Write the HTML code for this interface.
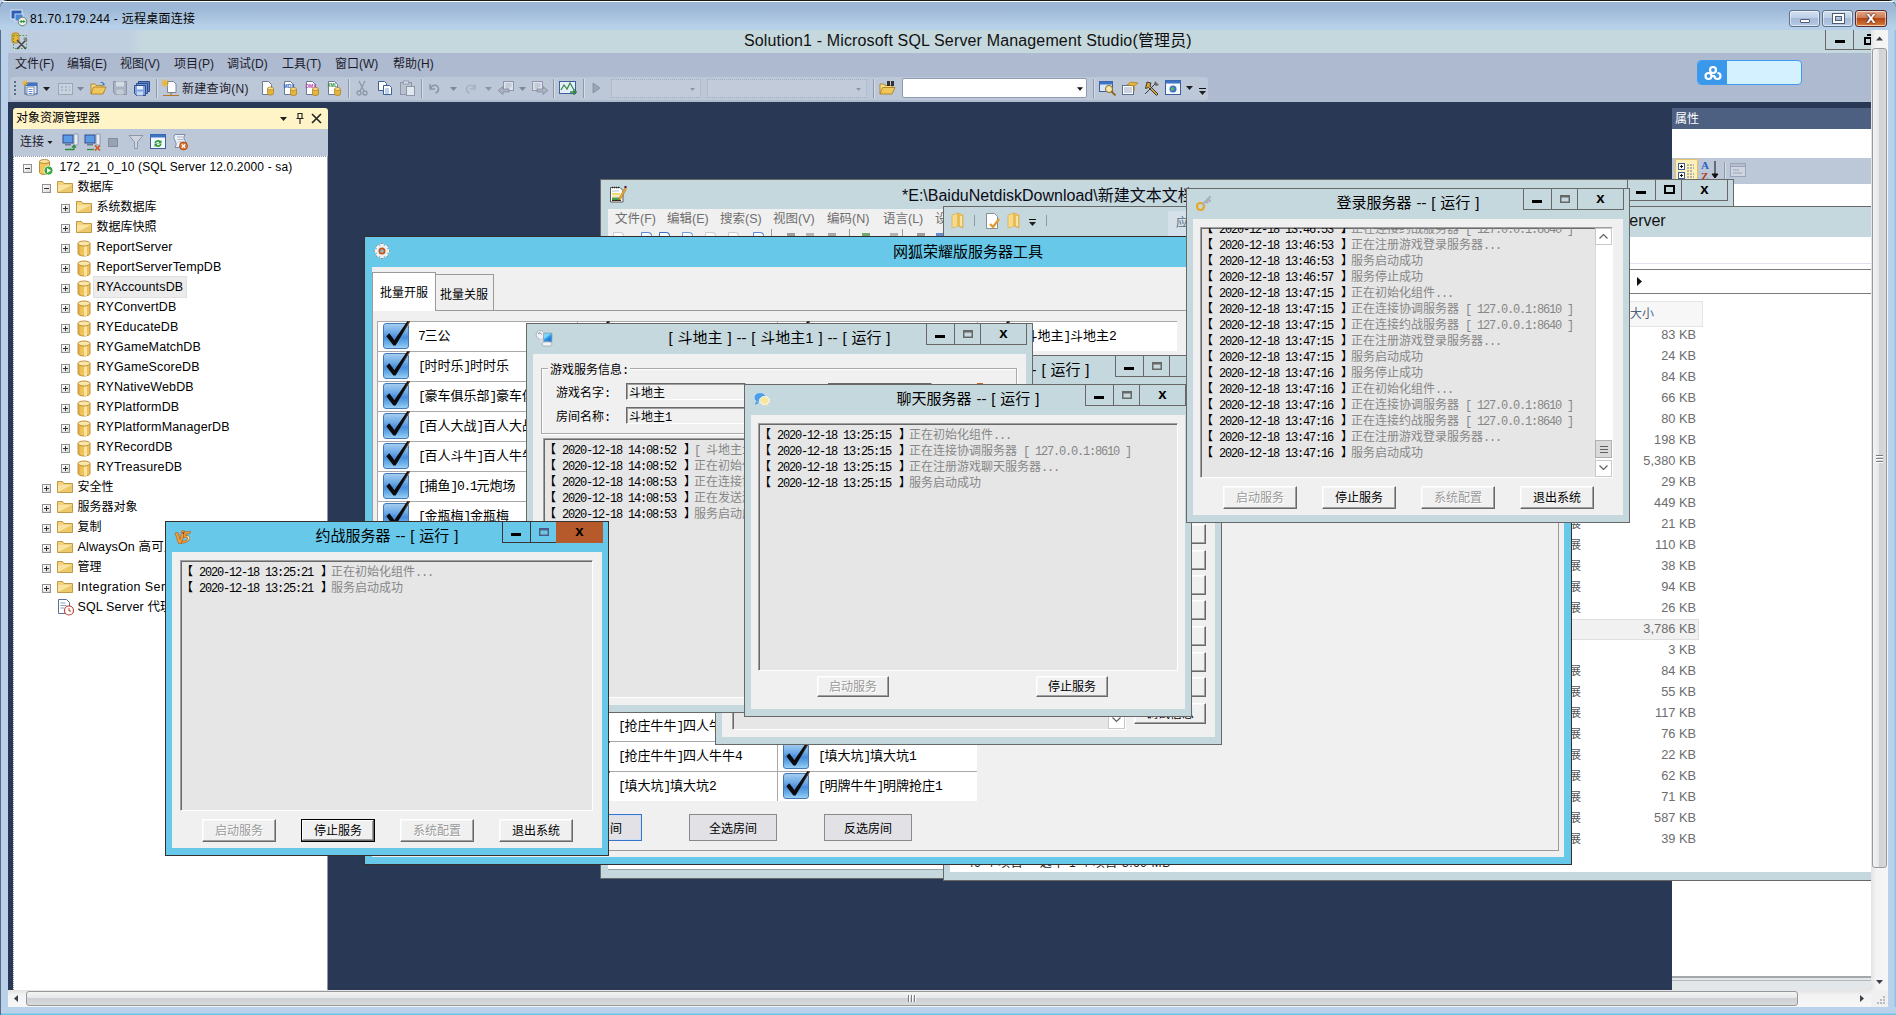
<!DOCTYPE html>
<html lang="zh-CN"><head><meta charset="utf-8"><title>81.70.179.244 - 远程桌面连接</title>
<style>
*{box-sizing:border-box;margin:0;padding:0}
html,body{width:1896px;height:1015px;overflow:hidden}
body{position:relative;background:#b9d1ea;font-family:"Liberation Sans","Noto Sans CJK SC",sans-serif;font-size:12px;color:#000}
div,span,svg{position:absolute}
i{font-style:normal;font-family:"Liberation Mono",monospace}
.t{white-space:nowrap;line-height:1}
/* ---------- RDP outer frame ---------- */
#rdpTop{left:0;top:0;width:1896px;height:30px;background:linear-gradient(#9db8d7 0,#9db8d7 28%,#a9c3df 55%,#b6d0e9 88%);border-top:1px solid #181818;border-radius:7px 7px 0 0}
#rdpTop:before{content:"";position:absolute;left:2px;right:2px;top:0;height:1px;background:#fbfdff;border-radius:7px}
.cap7{top:10px;height:17px;border:1px solid #5f708a;border-radius:3px;background:linear-gradient(#d3e0f0,#bccfe6 45%,#a5bbd9 50%,#b4c8e2);box-shadow:inset 0 0 0 1px rgba(255,255,255,.55)}
.cap7.close{background:linear-gradient(#e0a98f,#cf7b52 45%,#b4481d 50%,#c96a2c 85%,#d98a45);border-color:#5a2a2a}
#view{overflow:hidden}
#view div,#view span,#view svg{position:absolute}
/* scrollbars (win7) */
.sbv{left:1871px;top:30px;width:17px;height:960px;background:linear-gradient(90deg,#e3e3e3,#f3f3f3 30%,#f6f6f6)}
.sbh{left:8px;top:990px;width:1863px;height:17px;background:linear-gradient(#e3e3e3,#f3f3f3 30%,#f6f6f6)}
.thv{border:1px solid #97989b;border-radius:3px;background:linear-gradient(90deg,#f4f4f4,#e6e7e8 45%,#d0d2d5 50%,#d9dadc)}
.thh{border:1px solid #97989b;border-radius:3px;background:linear-gradient(#f4f4f4,#e6e7e8 45%,#cdd0d3 50%,#d9dadc)}
/* ---------- SSMS ---------- */
.menu span{top:0;line-height:23px;color:#1b1b2b}
.tbstrip{background:#bcc7d8;border-radius:3px}
.sep{width:1px;background:#8d98ab;box-shadow:1px 0 0 #d6dde8}
.ico{width:16px;height:16px}
/* ---------- win8 classic style windows ---------- */
.win{background:#c5d8de;border:1px solid #686868}
.win.act{background:#67c8ea;border-color:#35302f}
.win.act .capb,.win.act .capb b{border-color:#3a3434}
.cli{background:#f0f0f0}
.ttl{word-spacing:.7px;font-size:15px;line-height:30px;height:30px;top:0;white-space:nowrap;text-align:center;color:#000}
.capb{height:22px;top:-1px;border:1px solid #686868}
.capb b{top:0;height:20px;border-left:1px solid #686868;font-weight:normal}
.capb b:first-child{border-left:0}
.capb b,.capb u{position:absolute}
.capb u{text-decoration:none}
.gmin{left:8px;top:11px;width:10px;height:3px;background:#000}
.gmax{left:8px;top:6px;width:10px;height:8px;border:1px solid #686868;border-top-width:2px;box-shadow:inset 0 0 0 .5px #686868}
.gx{left:0;width:100%;top:0px;text-align:center;font:bold 15px/17px "Liberation Sans",sans-serif;color:#000}
.log{background:#e6e6e6;border:1px solid;border-color:#a0a0a0 #fff #fff #a0a0a0;box-shadow:inset 1px 1px 0 #696969;overflow:hidden}
.ln{left:0;white-space:nowrap;font-size:12px;line-height:16px;height:16px;color:#868686;font-family:"Liberation Sans","Noto Sans CJK SC",sans-serif}
.ln i{letter-spacing:-1.2px;font-size:12px}
.ln s{text-decoration:none;color:#000;position:static}
.ln b{position:static;font-weight:normal;margin:0 -2px 0 2px}
.lb{font:12px/14px "Liberation Sans","Noto Sans CJK SC",sans-serif}
.lb i{letter-spacing:-1.2px;font-size:12px}
.ed{width:120px;height:17px;background:#f0f0f0;border:1px solid;border-color:#696969 #fff #fff #696969;box-shadow:inset 1px 1px 0 #a0a0a0}
.btn{height:23px;width:74px;background:#f0f0f0;border:1px solid;border-color:#fff #696969 #696969 #fff;box-shadow:inset -1px -1px 0 #a0a0a0,inset 1px 1px 0 #f8f8f8;text-align:center;font:12px/22px "Liberation Sans","Noto Sans CJK SC",sans-serif;color:#000}
.btn.dis{color:#9a9a9a;text-shadow:1px 1px 0 #fff}
.btn.def{border-color:#000;box-shadow:inset -1px -1px 0 #696969,inset 1px 1px 0 #fff,inset -2px -2px 0 #a0a0a0}
/* wanghu list */
.it{width:200px;height:30px;background:#fff;border-top:1px solid #a9a9a9;border-left:1px solid #a9a9a9;overflow:visible}
.cb{position:absolute;left:5px;top:1px;width:26px;height:26px;border:1px solid #4878b4;border-radius:3px;background:linear-gradient(#a4cdf0,#6fabe6 35%,#4a8cd8 55%,#6cb0e8 80%,#9ad0f4);text-decoration:none}
.it span{left:40px;top:-1px;line-height:29px;font-size:13px;white-space:nowrap;font-family:"Liberation Sans","Noto Sans CJK SC",sans-serif}
.it span i{letter-spacing:-1.3px;font-size:13px}
.fb{height:27px;width:88px;background:#e1e1e6;border:1px solid #8a8a8a;text-align:center;font:12px/28px "Liberation Sans","Noto Sans CJK SC",sans-serif}
/* tree */
.tr{left:0;height:20px;line-height:20px;white-space:nowrap;font-size:12px}
.ex{width:9px;height:9px;border:1px solid #919191;background:linear-gradient(135deg,#fff,#d8d8d8)}
.ex:before{content:"";position:absolute;left:1px;top:3px;width:5px;height:1px;background:#333}
.ex.p:after{content:"";position:absolute;left:3px;top:1px;width:1px;height:5px;background:#333}
.sz{right:0;white-space:nowrap;color:#6d6d6d;font-size:12.800px;line-height:21px;text-align:right}

</style></head>
<body>
<div id="rdpTop"></div>
<svg style="left:10px;top:9px" width="18" height="18" viewBox="0 0 18 18"><rect x="1" y="1" width="11" height="9" fill="#2d5fb5" stroke="#dfe8f4"/><rect x="5" y="5" width="8" height="7" fill="#4a86d8" stroke="#e8eef8" stroke-width=".8"/><circle cx="12.5" cy="12.5" r="4.3" fill="#e9efe9" stroke="#6b7f6b"/><path d="M10.3 12.5h4.4M11.7 11l-1.5 1.5 1.5 1.5M13.3 11l1.5 1.5-1.5 1.5" stroke="#2e8b3a" fill="none" stroke-width="1"/></svg>
<span class="t" id="rdpTitle" style="left:30px;top:12px;font-size:12px;line-height:15px;letter-spacing:.27px">81.70.179.244 - 远程桌面连接</span>
<div class="cap7" style="left:1789px;width:31px"><div style="left:10px;top:8px;width:10px;height:4px;border:1px solid #4e5d74;background:#fff;border-radius:1px"></div></div>
<div class="cap7" style="left:1822px;width:31px"><div style="left:10px;top:3px;width:11px;height:9px;border:2px solid #fff;outline:1px solid #4e5d74;box-shadow:inset 0 0 0 1px #4e5d74"></div></div>
<div class="cap7 close" style="left:1855px;width:32px"><span class="t" style="left:0;width:30px;top:-2px;text-align:center;font:bold 17px/17px 'Liberation Sans',sans-serif;color:#fff;text-shadow:0 0 2px #400,0 0 1px #400">x</span></div>
<div style="left:1888px;top:30px;width:8px;height:985px;background:linear-gradient(90deg,#b9d1ea 70%,#7fbfe8)"></div>
<div style="left:0;top:1007px;width:1896px;height:8px;background:linear-gradient(#b9d1ea 70%,#58c0e0)"></div>
<div style="left:0;top:30px;width:1px;height:985px;background:#5a6a80"></div>
<div id="view" style="left:0;top:0;width:1896px;height:1015px;clip-path:inset(30px 25px 25px 8px);background:#293955">
<div style="left:8px;top:30px;width:1863px;height:23px;background:linear-gradient(90deg,#bfcde0 0,#c0cfe0 120px,#c5d8de 135px)"></div>
<svg style="left:11px;top:32px" width="18" height="19" viewBox="0 0 18 19"><rect x="1" y="1" width="7" height="10" rx="2" fill="#e8b53c" stroke="#a87818" stroke-width=".8"/><rect x="2.5" y="3.5" width="13" height="13" fill="none" stroke="#4a9a3a" stroke-dasharray="1.5 1.5"/><path d="M6 8l9 9M15 8l-9 9" stroke="#4a4a4a" stroke-width="1.6"/><path d="M13 6l3 3" stroke="#888" stroke-width="2.5"/></svg>
<span class="t" id="ssmsTitle" style="left:744px;top:32px;font-size:16px;line-height:18px;letter-spacing:.15px;color:#111">Solution1 - Microsoft SQL Server Management Studio(管理员)</span>
<div style="left:1825px;top:29px;width:60px;height:21px;border:1px solid #686868;background:#c5d8de"><div style="left:27px;top:0;width:1px;height:19px;background:#686868"></div><div style="left:9px;top:10px;width:10px;height:3px;background:#000"></div><div style="left:38px;top:7px;width:8px;height:8px;border:2px solid #000"></div><div style="left:41px;top:4px;width:8px;height:8px;border:2px solid #000;border-left:0;border-bottom:0"></div></div>
<div class="menu" style="left:8px;top:53px;width:1863px;height:49px;background:#aebad0;font-size:12px"><span class="t" style="left:7px;top:4px;line-height:14px">文件(F)</span><span class="t" style="left:59px;top:4px;line-height:14px">编辑(E)</span><span class="t" style="left:112px;top:4px;line-height:14px">视图(V)</span><span class="t" style="left:166px;top:4px;line-height:14px">项目(P)</span><span class="t" style="left:219px;top:4px;line-height:14px">调试(D)</span><span class="t" style="left:274px;top:4px;line-height:14px">工具(T)</span><span class="t" style="left:327px;top:4px;line-height:14px">窗口(W)</span><span class="t" style="left:385px;top:4px;line-height:14px">帮助(H)</span></div>
<div class="tbstrip" style="left:10px;top:77px;width:1198px;height:23px"></div>
<div style="left:14px;top:81px;width:2px;height:15px;background:repeating-linear-gradient(#5d6b85 0 2px,transparent 2px 4px)"></div>
<svg style="left:22px;top:80px" width="17" height="16" viewBox="0 0 17 16"><rect x="3" y="3" width="12" height="11" fill="#dbe7f7" stroke="#3d5f9a"/><rect x="3" y="3" width="12" height="3" fill="#3f73c4"/><rect x="5" y="7" width="7" height="8" fill="#fff" stroke="#5b6f92" stroke-width=".8"/><path d="M6.5 9.5h4M6.5 11.5h4M6.5 13.5h4" stroke="#3f73c4" stroke-width=".8"/><path d="M3 0v6M0 3h6M1 1l4 4M5 1l-4 4" stroke="#f0b428" stroke-width="1"/></svg>
<svg style="left:43px;top:87px" width="7" height="4" viewBox="0 0 7 4"><path d="M0 0h7L3.5 4z" fill="#1e1e1e"/></svg>
<svg style="left:58px;top:81px" width="15" height="14" viewBox="0 0 15 14"><rect x=".5" y="2.5" width="14" height="11" fill="#c9d2df" stroke="#9aa6b8"/><path d="M3 6h2M7 6h2M11 6h1M3 9h2M7 9h2M11 9h1" stroke="#8e9aae"/></svg>
<svg style="left:77px;top:87px" width="7" height="4" viewBox="0 0 7 4"><path d="M0 0h7L3.5 4z" fill="#7d8799"/></svg>
<svg style="left:90px;top:80px" width="17" height="16" viewBox="0 0 17 16"><path d="M1 14V4h4l1 1.5h6V7" fill="#f7dc8a" stroke="#a87818" stroke-width=".8"/><path d="M1 14l2.5-7H16l-3 7z" fill="#f0c75a" stroke="#a87818" stroke-width=".8"/><path d="M10 3c2-2 4-1 4 1l1.500-.5-1.800 2.300L12 4.500l1.200-.2c0-1-1.500-1.500-3.200-1.300z" fill="#3d6fc0"/></svg>
<svg style="left:113px;top:81px" width="14" height="14" viewBox="0 0 14 14"><path d="M.5.5h13v13h-11l-2-2z" fill="#a9b3c3" stroke="#8a94a6"/><rect x="3" y=".5" width="8" height="5" fill="#d5dbe5"/><rect x="3.500" y="8.500" width="7" height="5" fill="#c4ccd8"/></svg>
<svg style="left:134px;top:80px" width="17" height="16" viewBox="0 0 17 16"><path d="M4.500 1.500h11v10h-9l-2-2z" fill="#5b7fc4" stroke="#2e4d8a"/><path d="M2.500 3.500h11v10h-9l-2-2z" fill="#6f93d6" stroke="#2e4d8a"/><path d="M.5 5.500h11v10h-9l-2-2z" fill="#7fa3e2" stroke="#2e4d8a"/><rect x="3" y="6" width="6" height="3.500" fill="#e6eefb"/><rect x="3" y="11.500" width="6" height="4" fill="#c9d8f2"/></svg>
<div class="sep" style="left:156px;top:79px;height:19px"></div>
<svg style="left:161px;top:79px" width="19" height="18" viewBox="0 0 19 18"><path d="M6.500 2.500h6l2.500 2.500v8.500h-8.500z" fill="#fff" stroke="#6b7a94" stroke-width=".9"/><path d="M4 0v8M0 4h8M1.200 1.200l5.600 5.600M6.800 1.200L1.200 6.800" stroke="#f0b428" stroke-width="1.100"/><path d="M2 16.500h16M10 13.500v3" stroke="#b0762a" stroke-width="1.200"/></svg>
<span class="t" id="newq" style="left:182px;top:82px;line-height:14px;font-size:12px;letter-spacing:.3px;color:#1b1b2b">新建查询(N)</span>
<svg style="left:259px;top:80px" width="16" height="16" viewBox="0 0 16 16"><path d="M3.5 1.5h6l3 3v10h-9z" fill="#fff" stroke="#6b7a94"/><path d="M8.5 8.5v5a3 1.5 0 0 0 6 0v-5" fill="#e8b53c" stroke="#a87818" stroke-width=".7"/><ellipse cx="11.5" cy="8.5" rx="3" ry="1.5" fill="#f7dc8a" stroke="#a87818" stroke-width=".7"/></svg>
<svg style="left:281px;top:80px" width="16" height="16" viewBox="0 0 16 16"><path d="M3.5 1.5h6l3 3v10h-9z" fill="#fff" stroke="#6b7a94"/><text x="2.500" y="7.500" font-size="5" font-weight="bold" fill="#2a63c0" font-family="Liberation Sans,sans-serif">MDX</text><path d="M9.5 9v5a3 1.5 0 0 0 6 0v-5" fill="#e8b53c" stroke="#a87818" stroke-width=".7"/><ellipse cx="12.5" cy="9" rx="3" ry="1.5" fill="#f7dc8a" stroke="#a87818" stroke-width=".7"/></svg>
<svg style="left:303px;top:80px" width="16" height="16" viewBox="0 0 16 16"><path d="M3.5 1.5h6l3 3v10h-9z" fill="#fff" stroke="#6b7a94"/><text x="2.500" y="7.500" font-size="5" font-weight="bold" fill="#b04ab0" font-family="Liberation Sans,sans-serif">DMX</text><path d="M9.5 9v5a3 1.5 0 0 0 6 0v-5" fill="#e8b53c" stroke="#a87818" stroke-width=".7"/><ellipse cx="12.5" cy="9" rx="3" ry="1.5" fill="#f7dc8a" stroke="#a87818" stroke-width=".7"/></svg>
<svg style="left:325px;top:80px" width="16" height="16" viewBox="0 0 16 16"><path d="M3.5 1.5h6l3 3v10h-9z" fill="#fff" stroke="#6b7a94"/><text x="2.500" y="6.500" font-size="4.500" font-weight="bold" fill="#2e8b3a" font-family="Liberation Sans,sans-serif">XML</text><path d="M9.5 9v5a3 1.5 0 0 0 6 0v-5" fill="#e8b53c" stroke="#a87818" stroke-width=".7"/><ellipse cx="12.5" cy="9" rx="3" ry="1.5" fill="#f7dc8a" stroke="#a87818" stroke-width=".7"/></svg>
<div class="sep" style="left:348px;top:79px;height:19px"></div>
<svg style="left:355px;top:80px" width="14" height="16" viewBox="0 0 14 16"><path d="M4 1l5 10M10 1L5 11" stroke="#8d97a9" stroke-width="1.300"/><circle cx="4" cy="13" r="2" fill="none" stroke="#8d97a9" stroke-width="1.300"/><circle cx="10" cy="13" r="2" fill="none" stroke="#8d97a9" stroke-width="1.300"/></svg>
<svg style="left:377px;top:80px" width="16" height="16" viewBox="0 0 16 16"><path d="M1.500 1.500h6l2 2v7h-8z" fill="#fff" stroke="#3d5f9a"/><path d="M6.500 5.500h6l2 2v7h-8z" fill="#fff" stroke="#3d5f9a"/><path d="M8 9h4M8 11h4M8 13h4" stroke="#5b8ad6" stroke-width=".8"/></svg>
<svg style="left:399px;top:80px" width="17" height="16" viewBox="0 0 17 16"><rect x="1.500" y="2.500" width="11" height="12" fill="#b9c1ce" stroke="#8d97a9"/><rect x="4.500" y="1" width="5" height="3" fill="#d5dbe5" stroke="#8d97a9" stroke-width=".8"/><rect x="7.500" y="6.500" width="8" height="9" fill="#e2e6ed" stroke="#8d97a9"/></svg>
<div class="sep" style="left:421px;top:79px;height:19px"></div>
<svg style="left:428px;top:81px" width="13" height="13" viewBox="0 0 13 13"><path d="M2 3v5h5M2.500 7.500C4 3 10 3 10.500 8c0 2-1 3.500-3 4" fill="none" stroke="#8d97a9" stroke-width="1.600"/></svg>
<svg style="left:450px;top:87px" width="7" height="4" viewBox="0 0 7 4"><path d="M0 0h7L3.5 4z" fill="#7d8799"/></svg>
<svg style="left:463px;top:81px" width="15" height="13" viewBox="0 0 15 13"><path d="M12 3v5H7M11.500 7.500C10 3 4 3 3.500 8c0 2 1 3.500 3 4" fill="none" stroke="#aab2c1" stroke-width="1.600"/></svg>
<svg style="left:485px;top:87px" width="7" height="4" viewBox="0 0 7 4"><path d="M0 0h7L3.5 4z" fill="#8d97a9"/></svg>
<svg style="left:497px;top:80px" width="18" height="16" viewBox="0 0 18 16"><rect x="6.500" y="1.500" width="10" height="9" fill="#dfe4ec" stroke="#8d97a9"/><path d="M8.500 4h6M8.500 6h6M8.500 8h4" stroke="#9aa4b6" stroke-width=".8"/><path d="M1 10.500l5-4v2.500h6v3H6v2.500z" fill="#aab2c1" stroke="#7d8799" stroke-width=".7"/></svg>
<svg style="left:519px;top:87px" width="7" height="4" viewBox="0 0 7 4"><path d="M0 0h7L3.5 4z" fill="#7d8799"/></svg>
<svg style="left:531px;top:80px" width="18" height="16" viewBox="0 0 18 16"><rect x="1.500" y="1.500" width="10" height="9" fill="#dfe4ec" stroke="#8d97a9"/><path d="M3.500 4h6M3.500 6h6M3.500 8h4" stroke="#9aa4b6" stroke-width=".8"/><path d="M17 10.500l-5-4v2.500H6v3h6v2.500z" fill="#aab2c1" stroke="#7d8799" stroke-width=".7"/></svg>
<div class="sep" style="left:553px;top:79px;height:19px"></div>
<svg style="left:559px;top:80px" width="19" height="16" viewBox="0 0 19 16"><rect x=".5" y="1.500" width="16" height="12" fill="#e6eefb" stroke="#3d5f9a"/><path d="M2 10l3-5 3 4 3-6 4 7" fill="none" stroke="#2e8b3a" stroke-width="1.200"/><path d="M11 12h7M15 9v6" stroke="#2e8b3a" stroke-width="1.500"/></svg>
<div class="sep" style="left:583px;top:79px;height:19px"></div>
<svg style="left:592px;top:82px" width="9" height="12" viewBox="0 0 9 12"><path d="M1 1l7 5-7 5z" fill="#9aa4b6" stroke="#808b9e" stroke-width=".8"/></svg>
<div style="left:611px;top:79px;width:90px;height:19px;background:#c1cbda;border:1px dotted #a3aec2"></div><svg style="left:690px;top:88px" width="5" height="3" viewBox="0 0 7 4"><path d="M0 0h7L3.5 4z" fill="#8d97a9"/></svg>
<div style="left:707px;top:79px;width:160px;height:19px;background:#c1cbda;border:1px dotted #a3aec2"></div><svg style="left:856px;top:88px" width="5" height="3" viewBox="0 0 7 4"><path d="M0 0h7L3.5 4z" fill="#8d97a9"/></svg>
<div class="sep" style="left:873px;top:79px;height:19px"></div>
<svg style="left:879px;top:80px" width="18" height="16" viewBox="0 0 18 16"><path d="M1 14V4h4l1 1.500h7V8" fill="#f7dc8a" stroke="#a87818" stroke-width=".8"/><path d="M1 14l2.500-6.500H16L13 14z" fill="#f0c75a" stroke="#a87818" stroke-width=".8"/><path d="M8 1h3v5H8zM12 1h3v5h-3z" fill="#333"/></svg>
<div style="left:902px;top:78px;width:185px;height:20px;background:#fff;border:1px solid #8e9bb5;border-radius:2px"></div><svg style="left:1077px;top:87px" width="6" height="4" viewBox="0 0 7 4"><path d="M0 0h7L3.5 4z" fill="#111"/></svg>
<div class="sep" style="left:1093px;top:79px;height:19px"></div>
<svg style="left:1099px;top:80px" width="18" height="16" viewBox="0 0 18 16"><rect x=".5" y="1.500" width="13" height="10" fill="#dbe7f7" stroke="#3d5f9a"/><rect x=".5" y="1.500" width="13" height="3" fill="#3f73c4"/><circle cx="10" cy="9" r="3.500" fill="#f6e7b0" stroke="#8a6a1a"/><path d="M12.500 11.500l4 4" stroke="#8a6a1a" stroke-width="1.800"/></svg>
<svg style="left:1121px;top:80px" width="18" height="16" viewBox="0 0 18 16"><rect x="1.500" y="5.500" width="11" height="9" fill="#fff" stroke="#5b6f92"/><path d="M3 8h8M3 10h8M3 12h8" stroke="#7f93b6" stroke-width=".8"/><path d="M6 5l4-3 7 1-4 3z" fill="#e8b53c" stroke="#a87818" stroke-width=".7"/><path d="M13 6v5" stroke="#a87818"/></svg>
<svg style="left:1143px;top:80px" width="18" height="16" viewBox="0 0 18 16"><path d="M2 14L13 3M4 2l4 1-1 3 8 8-1.500 1.500-8-8-3 1z" fill="#d6a23a" stroke="#3c3c3c" stroke-width="1"/><path d="M12 1l4 4-3 1-2-2z" fill="#6a6a6a"/></svg>
<svg style="left:1165px;top:80px" width="18" height="16" viewBox="0 0 18 16"><rect x=".5" y=".5" width="15" height="14" fill="#f4f7fc" stroke="#3d5f9a"/><rect x=".5" y=".5" width="15" height="3" fill="#3f73c4"/><circle cx="8" cy="9" r="3.500" fill="#3f73c4"/><path d="M6 8c1-1 3-1 3 1s-2 1-3 2" fill="#5cb85c"/></svg>
<svg style="left:1186px;top:86px" width="7" height="4" viewBox="0 0 7 4"><path d="M0 0h7L3.5 4z" fill="#1e1e1e"/></svg>
<div style="left:1199px;top:88px;width:7px;height:1px;background:#111"></div><svg style="left:1199px;top:91px" width="7" height="4" viewBox="0 0 7 4"><path d="M0 0h7L3.5 4z" fill="#1e1e1e"/></svg>
<div style="left:1697px;top:60px;width:105px;height:25px;background:#d3f1ff;border:1px solid #3f9af0;border-radius:4px;overflow:hidden"><div style="left:0;top:0;width:29px;height:26px;background:#3a98ea"></div><svg style="left:5px;top:3px" width="20" height="18" viewBox="0 0 20 18"><circle cx="10" cy="6" r="3" fill="none" stroke="#fff" stroke-width="2.200"/><circle cx="5.500" cy="12" r="3" fill="none" stroke="#fff" stroke-width="2.200"/><path d="M11.500 12a3 3 0 1 0 3-3" fill="none" stroke="#fff" stroke-width="2.200"/><path d="M8.500 12h3.500" stroke="#fff" stroke-width="2.200"/></svg></div>
<div style="left:13px;top:108px;width:315px;height:21px;background:#fff4c8;border-radius:3px 3px 0 0"></div>
<span class="t" style="left:16px;top:111px;line-height:15px;font-size:12px">对象资源管理器</span>
<svg style="left:280px;top:117px" width="7" height="4" viewBox="0 0 7 4"><path d="M0 0h7L3.5 4z" fill="#1e1e1e"/></svg><svg style="left:295px;top:112px" width="10" height="13" viewBox="0 0 10 13"><path d="M3 1.500h4v5H3zM1.500 6.500h7M5 7v5" fill="none" stroke="#222" stroke-width="1.100"/></svg><svg style="left:311px;top:113px" width="11" height="11" viewBox="0 0 11 11"><path d="M1 1l9 9M10 1l-9 9" stroke="#222" stroke-width="1.600"/></svg>
<div style="left:13px;top:129px;width:315px;height:27px;background:#bcc7d8"></div>
<span class="t" style="left:20px;top:135px;line-height:15px;font-size:12px;color:#1b1b2b">连接</span><svg style="left:47px;top:141px" width="6" height="3" viewBox="0 0 7 4"><path d="M0 0h7L3.5 4z" fill="#1e1e1e"/></svg>
<svg style="left:62px;top:133px" width="18" height="18" viewBox="0 0 18 18"><rect x="1" y="2" width="10" height="8" fill="#5b9ae6" stroke="#2e4d8a"/><rect x="3" y="11" width="6" height="1.500" fill="#6b7a94"/><rect x="12" y="1" width="4" height="11" rx="1" fill="#e8edf5" stroke="#7f8ca4" stroke-width=".8"/><path d="M3 16.500h9M12 17v-4M10 14.500l2-2 2 2" fill="none" stroke="#2e8b3a" stroke-width="1.300"/></svg><svg style="left:84px;top:133px" width="18" height="18" viewBox="0 0 18 18"><rect x="1" y="2" width="10" height="8" fill="#5b9ae6" stroke="#2e4d8a"/><rect x="3" y="11" width="6" height="1.500" fill="#6b7a94"/><rect x="12" y="1" width="4" height="11" rx="1" fill="#e8edf5" stroke="#7f8ca4" stroke-width=".8"/><path d="M3 16.500h7" stroke="#2e8b3a" stroke-width="1.300"/><path d="M11 12.500l5 5M16 12.500l-5 5" stroke="#d2571c" stroke-width="1.600"/></svg><div style="left:108px;top:138px;width:10px;height:9px;background:#9aa2b0;border:1px solid #858da0"></div><svg style="left:128px;top:134px" width="16" height="16" viewBox="0 0 16 16"><path d="M1 1.500h14L9.500 8v6.500h-3V8z" fill="#cfd6e2" stroke="#8d97a9"/></svg><svg style="left:150px;top:134px" width="17" height="16" viewBox="0 0 17 16"><rect x=".5" y=".5" width="15" height="14" fill="#f4f7fc" stroke="#3d5f9a"/><rect x=".5" y=".5" width="15" height="3" fill="#3f73c4"/><path d="M4.500 9a3.500 3 0 0 1 6-2l1-1v3.500H8l1.200-1.200a2 2 0 0 0-3.200.7zM11.500 10a3.500 3 0 0 1-6 2l-1 1V9.500H8l-1.200 1.200a2 2 0 0 0 3.200-.7z" fill="#2e9b3a"/></svg><svg style="left:172px;top:133px" width="18" height="18" viewBox="0 0 18 18"><path d="M3 1.500h10c-1.500 2-1.500 4 0 6 1.500 2 1.500 5 0 7H3c1.500-2 1.500-5 0-7-1.500-2-1.500-4 0-6z" fill="#eef1f6" stroke="#7f8ca4"/><path d="M5 4h6M5.500 6.500h6M6.500 9h6" stroke="#9aa6ba" stroke-width=".8"/><circle cx="11.500" cy="13" r="4" fill="#e0732c" stroke="#9a3c0a" stroke-width=".7"/><path d="M9.800 11.300l3.400 3.400M13.200 11.300l-3.400 3.400" stroke="#fff" stroke-width="1.300"/></svg>
<div id="tree" style="left:13px;top:156px;width:315px;height:834px;background:#fff;border-left:1px dotted #8d97a9;border-top:1px dotted #8d97a9;border-right:1px solid #8d97a9;overflow:hidden">
<div class="ex " style="left:9px;top:7px"></div><svg style="left:23px;top:1px" width="17" height="18" viewBox="0 0 17 18"><path d="M2.500 3.500v11a5 2 0 0 0 10 0v-11" fill="#f0c75a" stroke="#a87818" stroke-width=".8"/><ellipse cx="7.500" cy="3.500" rx="5" ry="2" fill="#f8e3a0" stroke="#a87818" stroke-width=".8"/><circle cx="11.500" cy="12.500" r="4.500" fill="#3aa845" stroke="#fff" stroke-width=".8"/><path d="M10 10l4 2.500-4 2.500z" fill="#fff"/></svg><span class="tr" style="left:42.5px;top:0px;padding:0 3px;letter-spacing:.15px;">172_21_0_10 (SQL Server 12.0.2000 - sa)</span>
<div class="ex " style="left:28px;top:27px"></div><svg style="left:43px;top:22px" width="17" height="16" viewBox="0 0 17 16"><path d="M.5 13.500v-11h5l1.500 2h8.500v9z" fill="#f3d27a" stroke="#b8923a" stroke-width=".9"/><path d="M1 6h14v7H1z" fill="#f8e3a0"/><path d="M1 13L15 6v7z" fill="#e9bf5a" opacity=".75"/></svg><span class="tr" style="left:60.5px;top:20px;padding:0 3px;">数据库</span>
<div class="ex p" style="left:47px;top:47px"></div><svg style="left:61.5px;top:42px" width="17" height="16" viewBox="0 0 17 16"><path d="M.5 13.500v-11h5l1.500 2h8.500v9z" fill="#f3d27a" stroke="#b8923a" stroke-width=".9"/><path d="M1 6h14v7H1z" fill="#f8e3a0"/><path d="M1 13L15 6v7z" fill="#e9bf5a" opacity=".75"/></svg><span class="tr" style="left:79.5px;top:40px;padding:0 3px;">系统数据库</span>
<div class="ex p" style="left:47px;top:67px"></div><svg style="left:61.5px;top:62px" width="17" height="16" viewBox="0 0 17 16"><path d="M.5 13.500v-11h5l1.500 2h8.500v9z" fill="#f3d27a" stroke="#b8923a" stroke-width=".9"/><path d="M1 6h14v7H1z" fill="#f8e3a0"/><path d="M1 13L15 6v7z" fill="#e9bf5a" opacity=".75"/></svg><span class="tr" style="left:79.5px;top:60px;padding:0 3px;">数据库快照</span>
<div class="ex p" style="left:47px;top:87px"></div><svg style="left:63px;top:83px" width="15" height="17" viewBox="0 0 15 17"><path d="M1 3.500v10a6 2.500 0 0 0 12 0v-10" fill="#efc35a" stroke="#b8862a" stroke-width=".9"/><path d="M8.500 5v11" stroke="#fbeab0" stroke-width="3" opacity=".85"/><path d="M2.500 5v10" stroke="#d9a53a" stroke-width="1.500" opacity=".6"/><ellipse cx="7" cy="3.500" rx="6" ry="2.500" fill="#f9e6a8" stroke="#b8862a" stroke-width=".9"/></svg><span class="tr" style="left:79.5px;top:80px;padding:0 3px;letter-spacing:.15px;font-size:12.500px;">ReportServer</span>
<div class="ex p" style="left:47px;top:107px"></div><svg style="left:63px;top:103px" width="15" height="17" viewBox="0 0 15 17"><path d="M1 3.500v10a6 2.500 0 0 0 12 0v-10" fill="#efc35a" stroke="#b8862a" stroke-width=".9"/><path d="M8.500 5v11" stroke="#fbeab0" stroke-width="3" opacity=".85"/><path d="M2.500 5v10" stroke="#d9a53a" stroke-width="1.500" opacity=".6"/><ellipse cx="7" cy="3.500" rx="6" ry="2.500" fill="#f9e6a8" stroke="#b8862a" stroke-width=".9"/></svg><span class="tr" style="left:79.5px;top:100px;padding:0 3px;letter-spacing:.15px;font-size:12.500px;">ReportServerTempDB</span>
<div class="ex p" style="left:47px;top:127px"></div><svg style="left:63px;top:123px" width="15" height="17" viewBox="0 0 15 17"><path d="M1 3.500v10a6 2.500 0 0 0 12 0v-10" fill="#efc35a" stroke="#b8862a" stroke-width=".9"/><path d="M8.500 5v11" stroke="#fbeab0" stroke-width="3" opacity=".85"/><path d="M2.500 5v10" stroke="#d9a53a" stroke-width="1.500" opacity=".6"/><ellipse cx="7" cy="3.500" rx="6" ry="2.500" fill="#f9e6a8" stroke="#b8862a" stroke-width=".9"/></svg><span class="tr" style="left:79.5px;top:120px;padding:0 3px;letter-spacing:.15px;font-size:12.500px;background:#ececec;outline:1px solid #e0e0e0;">RYAccountsDB</span>
<div class="ex p" style="left:47px;top:147px"></div><svg style="left:63px;top:143px" width="15" height="17" viewBox="0 0 15 17"><path d="M1 3.500v10a6 2.500 0 0 0 12 0v-10" fill="#efc35a" stroke="#b8862a" stroke-width=".9"/><path d="M8.500 5v11" stroke="#fbeab0" stroke-width="3" opacity=".85"/><path d="M2.500 5v10" stroke="#d9a53a" stroke-width="1.500" opacity=".6"/><ellipse cx="7" cy="3.500" rx="6" ry="2.500" fill="#f9e6a8" stroke="#b8862a" stroke-width=".9"/></svg><span class="tr" style="left:79.5px;top:140px;padding:0 3px;letter-spacing:.15px;font-size:12.500px;">RYConvertDB</span>
<div class="ex p" style="left:47px;top:167px"></div><svg style="left:63px;top:163px" width="15" height="17" viewBox="0 0 15 17"><path d="M1 3.500v10a6 2.500 0 0 0 12 0v-10" fill="#efc35a" stroke="#b8862a" stroke-width=".9"/><path d="M8.500 5v11" stroke="#fbeab0" stroke-width="3" opacity=".85"/><path d="M2.500 5v10" stroke="#d9a53a" stroke-width="1.500" opacity=".6"/><ellipse cx="7" cy="3.500" rx="6" ry="2.500" fill="#f9e6a8" stroke="#b8862a" stroke-width=".9"/></svg><span class="tr" style="left:79.5px;top:160px;padding:0 3px;letter-spacing:.15px;font-size:12.500px;">RYEducateDB</span>
<div class="ex p" style="left:47px;top:187px"></div><svg style="left:63px;top:183px" width="15" height="17" viewBox="0 0 15 17"><path d="M1 3.500v10a6 2.500 0 0 0 12 0v-10" fill="#efc35a" stroke="#b8862a" stroke-width=".9"/><path d="M8.500 5v11" stroke="#fbeab0" stroke-width="3" opacity=".85"/><path d="M2.500 5v10" stroke="#d9a53a" stroke-width="1.500" opacity=".6"/><ellipse cx="7" cy="3.500" rx="6" ry="2.500" fill="#f9e6a8" stroke="#b8862a" stroke-width=".9"/></svg><span class="tr" style="left:79.5px;top:180px;padding:0 3px;letter-spacing:.15px;font-size:12.500px;">RYGameMatchDB</span>
<div class="ex p" style="left:47px;top:207px"></div><svg style="left:63px;top:203px" width="15" height="17" viewBox="0 0 15 17"><path d="M1 3.500v10a6 2.500 0 0 0 12 0v-10" fill="#efc35a" stroke="#b8862a" stroke-width=".9"/><path d="M8.500 5v11" stroke="#fbeab0" stroke-width="3" opacity=".85"/><path d="M2.500 5v10" stroke="#d9a53a" stroke-width="1.500" opacity=".6"/><ellipse cx="7" cy="3.500" rx="6" ry="2.500" fill="#f9e6a8" stroke="#b8862a" stroke-width=".9"/></svg><span class="tr" style="left:79.5px;top:200px;padding:0 3px;letter-spacing:.15px;font-size:12.500px;">RYGameScoreDB</span>
<div class="ex p" style="left:47px;top:227px"></div><svg style="left:63px;top:223px" width="15" height="17" viewBox="0 0 15 17"><path d="M1 3.500v10a6 2.500 0 0 0 12 0v-10" fill="#efc35a" stroke="#b8862a" stroke-width=".9"/><path d="M8.500 5v11" stroke="#fbeab0" stroke-width="3" opacity=".85"/><path d="M2.500 5v10" stroke="#d9a53a" stroke-width="1.500" opacity=".6"/><ellipse cx="7" cy="3.500" rx="6" ry="2.500" fill="#f9e6a8" stroke="#b8862a" stroke-width=".9"/></svg><span class="tr" style="left:79.5px;top:220px;padding:0 3px;letter-spacing:.15px;font-size:12.500px;">RYNativeWebDB</span>
<div class="ex p" style="left:47px;top:247px"></div><svg style="left:63px;top:243px" width="15" height="17" viewBox="0 0 15 17"><path d="M1 3.500v10a6 2.500 0 0 0 12 0v-10" fill="#efc35a" stroke="#b8862a" stroke-width=".9"/><path d="M8.500 5v11" stroke="#fbeab0" stroke-width="3" opacity=".85"/><path d="M2.500 5v10" stroke="#d9a53a" stroke-width="1.500" opacity=".6"/><ellipse cx="7" cy="3.500" rx="6" ry="2.500" fill="#f9e6a8" stroke="#b8862a" stroke-width=".9"/></svg><span class="tr" style="left:79.5px;top:240px;padding:0 3px;letter-spacing:.15px;font-size:12.500px;">RYPlatformDB</span>
<div class="ex p" style="left:47px;top:267px"></div><svg style="left:63px;top:263px" width="15" height="17" viewBox="0 0 15 17"><path d="M1 3.500v10a6 2.500 0 0 0 12 0v-10" fill="#efc35a" stroke="#b8862a" stroke-width=".9"/><path d="M8.500 5v11" stroke="#fbeab0" stroke-width="3" opacity=".85"/><path d="M2.500 5v10" stroke="#d9a53a" stroke-width="1.500" opacity=".6"/><ellipse cx="7" cy="3.500" rx="6" ry="2.500" fill="#f9e6a8" stroke="#b8862a" stroke-width=".9"/></svg><span class="tr" style="left:79.5px;top:260px;padding:0 3px;letter-spacing:.15px;font-size:12.500px;">RYPlatformManagerDB</span>
<div class="ex p" style="left:47px;top:287px"></div><svg style="left:63px;top:283px" width="15" height="17" viewBox="0 0 15 17"><path d="M1 3.500v10a6 2.500 0 0 0 12 0v-10" fill="#efc35a" stroke="#b8862a" stroke-width=".9"/><path d="M8.500 5v11" stroke="#fbeab0" stroke-width="3" opacity=".85"/><path d="M2.500 5v10" stroke="#d9a53a" stroke-width="1.500" opacity=".6"/><ellipse cx="7" cy="3.500" rx="6" ry="2.500" fill="#f9e6a8" stroke="#b8862a" stroke-width=".9"/></svg><span class="tr" style="left:79.5px;top:280px;padding:0 3px;letter-spacing:.15px;font-size:12.500px;">RYRecordDB</span>
<div class="ex p" style="left:47px;top:307px"></div><svg style="left:63px;top:303px" width="15" height="17" viewBox="0 0 15 17"><path d="M1 3.500v10a6 2.500 0 0 0 12 0v-10" fill="#efc35a" stroke="#b8862a" stroke-width=".9"/><path d="M8.500 5v11" stroke="#fbeab0" stroke-width="3" opacity=".85"/><path d="M2.500 5v10" stroke="#d9a53a" stroke-width="1.500" opacity=".6"/><ellipse cx="7" cy="3.500" rx="6" ry="2.500" fill="#f9e6a8" stroke="#b8862a" stroke-width=".9"/></svg><span class="tr" style="left:79.5px;top:300px;padding:0 3px;letter-spacing:.15px;font-size:12.500px;">RYTreasureDB</span>
<div class="ex p" style="left:28px;top:327px"></div><svg style="left:43px;top:322px" width="17" height="16" viewBox="0 0 17 16"><path d="M.5 13.500v-11h5l1.500 2h8.500v9z" fill="#f3d27a" stroke="#b8923a" stroke-width=".9"/><path d="M1 6h14v7H1z" fill="#f8e3a0"/><path d="M1 13L15 6v7z" fill="#e9bf5a" opacity=".75"/></svg><span class="tr" style="left:60.5px;top:320px;padding:0 3px;">安全性</span>
<div class="ex p" style="left:28px;top:347px"></div><svg style="left:43px;top:342px" width="17" height="16" viewBox="0 0 17 16"><path d="M.5 13.500v-11h5l1.500 2h8.500v9z" fill="#f3d27a" stroke="#b8923a" stroke-width=".9"/><path d="M1 6h14v7H1z" fill="#f8e3a0"/><path d="M1 13L15 6v7z" fill="#e9bf5a" opacity=".75"/></svg><span class="tr" style="left:60.5px;top:340px;padding:0 3px;">服务器对象</span>
<div class="ex p" style="left:28px;top:367px"></div><svg style="left:43px;top:362px" width="17" height="16" viewBox="0 0 17 16"><path d="M.5 13.500v-11h5l1.500 2h8.500v9z" fill="#f3d27a" stroke="#b8923a" stroke-width=".9"/><path d="M1 6h14v7H1z" fill="#f8e3a0"/><path d="M1 13L15 6v7z" fill="#e9bf5a" opacity=".75"/></svg><span class="tr" style="left:60.5px;top:360px;padding:0 3px;">复制</span>
<div class="ex p" style="left:28px;top:387px"></div><svg style="left:43px;top:382px" width="17" height="16" viewBox="0 0 17 16"><path d="M.5 13.500v-11h5l1.500 2h8.500v9z" fill="#f3d27a" stroke="#b8923a" stroke-width=".9"/><path d="M1 6h14v7H1z" fill="#f8e3a0"/><path d="M1 13L15 6v7z" fill="#e9bf5a" opacity=".75"/></svg><span class="tr" style="left:60.5px;top:380px;padding:0 3px;letter-spacing:.15px;font-size:12.500px;">AlwaysOn 高可用性</span>
<div class="ex p" style="left:28px;top:407px"></div><svg style="left:43px;top:402px" width="17" height="16" viewBox="0 0 17 16"><path d="M.5 13.500v-11h5l1.500 2h8.500v9z" fill="#f3d27a" stroke="#b8923a" stroke-width=".9"/><path d="M1 6h14v7H1z" fill="#f8e3a0"/><path d="M1 13L15 6v7z" fill="#e9bf5a" opacity=".75"/></svg><span class="tr" style="left:60.5px;top:400px;padding:0 3px;">管理</span>
<div class="ex p" style="left:28px;top:427px"></div><svg style="left:43px;top:422px" width="17" height="16" viewBox="0 0 17 16"><path d="M.5 13.500v-11h5l1.500 2h8.500v9z" fill="#f3d27a" stroke="#b8923a" stroke-width=".9"/><path d="M1 6h14v7H1z" fill="#f8e3a0"/><path d="M1 13L15 6v7z" fill="#e9bf5a" opacity=".75"/></svg><span class="tr" style="left:60.5px;top:420px;padding:0 3px;letter-spacing:.4px;font-size:12.500px;">Integration Services 目录</span>
<svg style="left:43px;top:441px" width="18" height="18" viewBox="0 0 18 18"><path d="M1.500 1.500h8l3 3v11h-11z" fill="#fff" stroke="#5b6f92"/><path d="M3.500 5h5M3.500 7.500h6M3.500 10h4" stroke="#7f93b6" stroke-width=".9"/><circle cx="12" cy="12.500" r="4.500" fill="#fff" stroke="#c0392b" stroke-width="1.100"/><path d="M12 10v3h2" fill="none" stroke="#c0392b" stroke-width="1"/></svg><span class="tr" style="left:60.5px;top:440px;padding:0 3px;letter-spacing:.15px;font-size:12.500px;">SQL Server 代理 (已禁用代理 XP)</span>
</div>
<div style="left:1672px;top:108px;width:199px;height:21px;background:#4d6082"></div><span class="t" style="left:1675px;top:112px;line-height:15px;font-size:12px;color:#fff">属性</span>
<div style="left:1672px;top:129px;width:199px;height:861px;background:#fff"></div>
<div style="left:1672px;top:158px;width:199px;height:26px;background:#bcc7d8"></div>
<div style="left:1675px;top:159px;width:23px;height:24px;background:#fdf0b9;border:1px solid #e5c365"></div><svg style="left:1678px;top:162px" width="17" height="19" viewBox="0 0 17 19"><rect x=".5" y="1.500" width="6" height="6" fill="#fff" stroke="#3d5f9a"/><path d="M2 4.500h3M3.500 3v3" stroke="#111"/><rect x=".5" y="10.500" width="6" height="6" fill="#fff" stroke="#3d5f9a"/><path d="M2 13.500h3M3.500 12v3" stroke="#111"/><path d="M9 3h7M9 6h7M9 12h7M9 15h7M9 9h5" stroke="#6b7a94" stroke-dasharray="2 1"/></svg><span class="t" style="left:1701px;top:160px;font:bold 11px/11px 'Liberation Serif',serif;color:#2a5fc0">A</span><span class="t" style="left:1701px;top:171px;font:bold 11px/11px 'Liberation Serif',serif;color:#b0401a">Z</span><svg style="left:1711px;top:161px" width="8" height="19" viewBox="0 0 8 19"><path d="M4 0v17M1 13l3 4 3-4z" stroke="#111" fill="#111"/></svg><div class="sep" style="left:1724px;top:162px;height:19px"></div><svg style="left:1730px;top:163px" width="17" height="15" viewBox="0 0 17 15"><rect x=".5" y="2.500" width="15" height="11" fill="#cfd6e2" stroke="#9aa4b6"/><rect x=".5" y=".5" width="15" height="3" fill="#b5bfce" stroke="#9aa4b6"/><path d="M3 7h6M3 10h9" stroke="#9aa4b6"/></svg>
<div style="left:1672px;top:976px;width:199px;height:14px;background:#e4e7ea;border-top:2px solid #a5a7aa"></div><div style="left:1672px;top:980px;width:199px;height:1px;background:#b5b7ba"></div>
<div class="win" id="npp" style="left:600px;top:179px;width:1134px;height:700px">
<svg style="left:9px;top:6px" width="18" height="18" viewBox="0 0 18 18"><path d="M.5 1.500h9.500l3 3v11.500H.5z" fill="#fdfdfd" stroke="#5a5a5a"/><path d="M2 1.500h7" stroke="#222" stroke-width="1.600" stroke-dasharray="1 1"/><path d="M2 5h7" stroke="#b8c4d8"/><rect x="2" y="7" width="8" height="2" fill="#f0d878"/><rect x="2" y="9.500" width="8" height="1.500" fill="#f6e6a0"/><rect x="2" y="11.500" width="8" height="2.500" fill="#4a9a4a"/><rect x="2" y="14" width="9" height="1" fill="#3a2a1a"/><path d="M15 1.500L8.500 13l2 .8 6-11z" fill="#e8a838" stroke="#a86a18" stroke-width=".5"/><rect x="14.500" y="0" width="2" height="2" fill="#5a0a2a"/></svg><span class="t" id="nppTitle" style="left:301px;top:7px;font-size:16px;line-height:18px;color:#0a0a14">*E:\BaiduNetdiskDownload\新建文本文档 (2).txt - Notepad++</span>
<div class="capb" style="right:5px;width:101px"><b style="left:0;width:27px"><u class="gmin"></u></b><b style="left:27px;width:26px"><u class="gmax" style="border-color:#000;border-width:2px;box-shadow:none;width:11px;height:9px;top:5px"></u></b><b style="left:53px;width:46px;"><u class="gx">x</u></b></div><div style="left:7px;top:29px;width:1119px;height:60px;background:#f0f0f0"></div><span class="t" style="left:14px;top:32px;line-height:15px;font-size:12.500px;color:#6e6e6e">文件(F)</span><span class="t" style="left:66px;top:32px;line-height:15px;font-size:12.500px;color:#6e6e6e">编辑(E)</span><span class="t" style="left:119px;top:32px;line-height:15px;font-size:12.500px;color:#6e6e6e">搜索(S)</span><span class="t" style="left:172px;top:32px;line-height:15px;font-size:12.500px;color:#6e6e6e">视图(V)</span><span class="t" style="left:226px;top:32px;line-height:15px;font-size:12.500px;color:#6e6e6e">编码(N)</span><span class="t" style="left:282px;top:32px;line-height:15px;font-size:12.500px;color:#6e6e6e">语言(L)</span><span class="t" style="left:334px;top:32px;line-height:15px;font-size:12.500px;color:#6e6e6e">设置(T)</span><div style="left:12px;top:52px;width:11px;height:8px;border:1px solid #c8ccd0;border-bottom:0;border-radius:1px 4px 0 0;background:#fbfcfd"></div><div style="left:40px;top:52px;width:11px;height:8px;border:1px solid #5b8ad6;border-bottom:0;border-radius:1px 4px 0 0;background:#fbfcfd"></div><div style="left:58px;top:52px;width:11px;height:8px;border:1px solid #3d6fc0;border-bottom:0;border-radius:1px 4px 0 0;background:#fbfcfd"></div><div style="left:81px;top:52px;width:11px;height:8px;border:1px solid #6f9be0;border-bottom:0;border-radius:1px 4px 0 0;background:#fbfcfd"></div><div style="left:104px;top:52px;width:11px;height:8px;border:1px solid #c8ccd0;border-bottom:0;border-radius:1px 4px 0 0;background:#fbfcfd"></div><div style="left:127px;top:52px;width:11px;height:8px;border:1px solid #c8ccd0;border-bottom:0;border-radius:1px 4px 0 0;background:#fbfcfd"></div><div style="left:152px;top:52px;width:11px;height:8px;border:1px solid #5b8ad6;border-bottom:0;border-radius:1px 4px 0 0;background:#fbfcfd"></div><div style="left:170px;top:49px;width:1px;height:8px;background:#9a9a9a"></div><div style="left:248px;top:49px;width:1px;height:8px;background:#9a9a9a"></div><div style="left:301px;top:49px;width:1px;height:8px;background:#9a9a9a"></div><div style="left:186px;top:53px;width:8px;height:4px;background:#777;opacity:.7"></div><div style="left:205px;top:53px;width:8px;height:4px;background:#999;opacity:.7"></div><div style="left:227px;top:53px;width:8px;height:4px;background:#888;opacity:.7"></div><div style="left:261px;top:53px;width:8px;height:4px;background:#3a8a3a;opacity:.7"></div><div style="left:289px;top:53px;width:8px;height:4px;background:#999;opacity:.7"></div><div style="left:316px;top:53px;width:8px;height:4px;background:#777;opacity:.7"></div><div style="left:335px;top:53px;width:8px;height:4px;background:#2a63c0;opacity:.7"></div><div style="left:7px;top:600px;width:1119px;height:90px;background:#fff;border-bottom:1px solid #9aa4a8"></div>
</div>
<div class="win" id="exp" style="left:943px;top:206px;width:961px;height:675px">
<svg style="left:6px;top:5px" width="16" height="18" viewBox="0 0 16 18"><path d="M2 16V3l6-2v13z" fill="#f6d98a" stroke="#d9a93a" stroke-width=".6"/><path d="M8 1l5 2v13l-5-2z" fill="#eebf55" stroke="#d9a93a" stroke-width=".6"/><path d="M11 4v10" stroke="#fbeec2" stroke-width="1.500"/></svg><div style="left:30px;top:8px;width:1px;height:11px;background:#8d9aa2"></div><svg style="left:40px;top:5px" width="17" height="18" viewBox="0 0 17 18"><path d="M2.500 1.500h8l3 3v12h-11z" fill="#fff" stroke="#7a858c" stroke-width=".9"/><path d="M6 12l3 3 6-8" fill="none" stroke="#e09a2a" stroke-width="2.200"/></svg><svg style="left:62px;top:5px" width="16" height="18" viewBox="0 0 16 18"><path d="M2 16V3l6-2v13z" fill="#f6d98a" stroke="#d9a93a" stroke-width=".6"/><path d="M8 1l5 2v13l-5-2z" fill="#eebf55" stroke="#d9a93a" stroke-width=".6"/><path d="M11 4v10" stroke="#fbeec2" stroke-width="1.500"/></svg><div style="left:85px;top:12px;width:7px;height:1px;background:#111"></div><svg style="left:85px;top:15px" width="7" height="4" viewBox="0 0 7 4"><path d="M0 0h7L3.5 4z" fill="#1e1e1e"/></svg><div style="left:102px;top:8px;width:1px;height:11px;background:#8d9aa2"></div><div style="left:224px;top:4px;width:120px;height:26px;background:#d5e1ea"></div><span class="t" style="left:232px;top:9px;font-size:12px;line-height:14px;color:#5a6a78">应用程序工具</span><span class="t" id="expTitle" style="left:615px;top:5px;font-size:16px;line-height:18px;color:#111">PlatformServer</span><div style="left:6px;top:30px;width:960px;height:635px;background:#fff"></div><div style="left:0;top:56px;width:960px;height:1px;background:#dfe3ee"></div><div style="left:0;top:62px;width:960px;height:1px;background:#7a7a7a"></div><div style="left:0;top:86px;width:960px;height:1px;background:#7a7a7a"></div><svg style="left:693px;top:70px" width="6" height="9" viewBox="0 0 6 9"><path d="M0 0l5 4.500L0 9z" fill="#111"/></svg><div style="left:676px;top:94px;width:83px;height:26px;background:#f7f7f8;border:1px solid #e3e5ea"></div><span class="t" style="left:686px;top:100px;font-size:12px;line-height:14px;color:#4c607a">大小</span><div style="left:616px;top:412px;width:139px;height:21px;background:#f1f1f1;border:1px solid #dedede"></div><span class="sz" style="left:656px;width:96px;top:117px">83 KB</span><span class="sz" style="left:656px;width:96px;top:138px">24 KB</span><span class="sz" style="left:656px;width:96px;top:159px">84 KB</span><span class="sz" style="left:656px;width:96px;top:180px">66 KB</span><span class="sz" style="left:656px;width:96px;top:201px">80 KB</span><span class="sz" style="left:656px;width:96px;top:222px">198 KB</span><span class="sz" style="left:656px;width:96px;top:243px">5,380 KB</span><span class="sz" style="left:656px;width:96px;top:264px">29 KB</span><span class="sz" style="left:656px;width:96px;top:285px">449 KB</span><span class="sz" style="left:656px;width:96px;top:306px">21 KB</span><span class="t" style="left:565px;top:310px;font-size:12px;line-height:14px;color:#555">应用程序扩展</span><span class="sz" style="left:656px;width:96px;top:327px">110 KB</span><span class="t" style="left:565px;top:331px;font-size:12px;line-height:14px;color:#555">应用程序扩展</span><span class="sz" style="left:656px;width:96px;top:348px">38 KB</span><span class="t" style="left:565px;top:352px;font-size:12px;line-height:14px;color:#555">应用程序扩展</span><span class="sz" style="left:656px;width:96px;top:369px">94 KB</span><span class="t" style="left:565px;top:373px;font-size:12px;line-height:14px;color:#555">应用程序扩展</span><span class="sz" style="left:656px;width:96px;top:390px">26 KB</span><span class="t" style="left:565px;top:394px;font-size:12px;line-height:14px;color:#555">应用程序扩展</span><span class="sz" style="left:656px;width:96px;top:411px">3,786 KB</span><span class="sz" style="left:656px;width:96px;top:432px">3 KB</span><span class="sz" style="left:656px;width:96px;top:453px">84 KB</span><span class="t" style="left:565px;top:457px;font-size:12px;line-height:14px;color:#555">应用程序扩展</span><span class="sz" style="left:656px;width:96px;top:474px">55 KB</span><span class="t" style="left:565px;top:478px;font-size:12px;line-height:14px;color:#555">应用程序扩展</span><span class="sz" style="left:656px;width:96px;top:495px">117 KB</span><span class="t" style="left:565px;top:499px;font-size:12px;line-height:14px;color:#555">应用程序扩展</span><span class="sz" style="left:656px;width:96px;top:516px">76 KB</span><span class="t" style="left:565px;top:520px;font-size:12px;line-height:14px;color:#555">应用程序扩展</span><span class="sz" style="left:656px;width:96px;top:537px">22 KB</span><span class="t" style="left:565px;top:541px;font-size:12px;line-height:14px;color:#555">应用程序扩展</span><span class="sz" style="left:656px;width:96px;top:558px">62 KB</span><span class="t" style="left:565px;top:562px;font-size:12px;line-height:14px;color:#555">应用程序扩展</span><span class="sz" style="left:656px;width:96px;top:579px">71 KB</span><span class="t" style="left:565px;top:583px;font-size:12px;line-height:14px;color:#555">应用程序扩展</span><span class="sz" style="left:656px;width:96px;top:600px">587 KB</span><span class="t" style="left:565px;top:604px;font-size:12px;line-height:14px;color:#555">应用程序扩展</span><span class="sz" style="left:656px;width:96px;top:621px">39 KB</span><span class="t" style="left:565px;top:625px;font-size:12px;line-height:14px;color:#555">应用程序扩展</span><span class="t" style="left:23px;top:649px;font-size:12px;line-height:14px;color:#222;letter-spacing:.6px">49 个项目　 选中 1 个项目 3.69 MB</span></div>
<div class="win act" id="wh" style="left:364px;top:236px;width:1208px;height:629px">
<svg style="left:9px;top:6px" width="16" height="16" viewBox="0 0 16 16"><path d="M12.5 8.0L15.5 8.0M11.2 11.2L13.3 13.3M8.0 12.5L8.0 15.5M4.8 11.2L2.7 13.3M3.5 8.0L0.5 8.0M4.8 4.8L2.7 2.7M8.0 3.5L8.0 0.5M11.2 4.8L13.3 2.7" stroke="#f4f4f4" stroke-width="3.400" fill="none"/><path d="M15.1 8.0L15.9 8.0M13.0 13.0L13.6 13.6M8.0 15.1L8.0 15.9M3.0 13.0L2.4 13.6M0.9 8.0L0.1 8.0M3.0 3.0L2.4 2.4M8.0 0.9L8.0 0.1M13.0 3.0L13.6 2.4" stroke="#8d735f" stroke-width="2.600" fill="none" opacity=".75"/><circle cx="8" cy="8" r="5.400" fill="#eeeeee"/><circle cx="8" cy="8" r="2.500" fill="none" stroke="#c2571c" stroke-width="2"/><circle cx="8" cy="8" r="1.300" fill="#67c8ea"/></svg><span class="ttl" style="left:0;width:1206px;top:0">网狐荣耀版服务器工具</span>
<div class="cli" style="left:7px;top:30px;width:1192px;height:590px"></div>
<div style="left:7px;top:73px;width:1187px;height:541px;border:1px solid #9a9a9a;background:#f0f0f0"></div><div style="left:7px;top:35px;width:64px;height:39px;background:#fff;border:1px solid #9a9a9a;border-bottom:0"></div><div style="left:71px;top:37px;width:58px;height:36px;background:#f0f0f0;border:1px solid #9a9a9a;border-left:0;border-bottom:0"></div><span class="t" style="left:15px;top:49px;font:12px/14px 'Liberation Sans','Noto Sans CJK SC',sans-serif">批量开服</span><span class="t" style="left:75px;top:51px;font:12px/14px 'Liberation Sans','Noto Sans CJK SC',sans-serif">批量关服</span><div class="it" style="left:12px;top:84px"><u class="cb"></u><svg style="left:5px;top:-1px" width="28" height="27" viewBox="0 0 28 27"><path d="M3.300 15.200L6.300 12.300 11.400 19 24.300 .2 27 .6 12.600 24.500H10.400z" fill="#0b0b0e"/><path d="M25.500 .4L27 .6 18.500 14z" fill="#5a3a2a"/></svg><span><i>7</i>三公</span></div><div class="it" style="left:12px;top:114px"><u class="cb"></u><svg style="left:5px;top:-1px" width="28" height="27" viewBox="0 0 28 27"><path d="M3.300 15.200L6.300 12.300 11.400 19 24.300 .2 27 .6 12.600 24.500H10.400z" fill="#0b0b0e"/><path d="M25.500 .4L27 .6 18.500 14z" fill="#5a3a2a"/></svg><span><i>[</i>时时乐<i>]</i>时时乐</span></div><div class="it" style="left:12px;top:144px"><u class="cb"></u><svg style="left:5px;top:-1px" width="28" height="27" viewBox="0 0 28 27"><path d="M3.300 15.200L6.300 12.300 11.400 19 24.300 .2 27 .6 12.600 24.500H10.400z" fill="#0b0b0e"/><path d="M25.500 .4L27 .6 18.500 14z" fill="#5a3a2a"/></svg><span><i>[</i>豪车俱乐部<i>]</i>豪车俱乐部</span></div><div class="it" style="left:12px;top:174px"><u class="cb"></u><svg style="left:5px;top:-1px" width="28" height="27" viewBox="0 0 28 27"><path d="M3.300 15.200L6.300 12.300 11.400 19 24.300 .2 27 .6 12.600 24.500H10.400z" fill="#0b0b0e"/><path d="M25.500 .4L27 .6 18.500 14z" fill="#5a3a2a"/></svg><span><i>[</i>百人大战<i>]</i>百人大战</span></div><div class="it" style="left:12px;top:204px"><u class="cb"></u><svg style="left:5px;top:-1px" width="28" height="27" viewBox="0 0 28 27"><path d="M3.300 15.200L6.300 12.300 11.400 19 24.300 .2 27 .6 12.600 24.500H10.400z" fill="#0b0b0e"/><path d="M25.500 .4L27 .6 18.500 14z" fill="#5a3a2a"/></svg><span><i>[</i>百人斗牛<i>]</i>百人牛牛</span></div><div class="it" style="left:12px;top:234px"><u class="cb"></u><svg style="left:5px;top:-1px" width="28" height="27" viewBox="0 0 28 27"><path d="M3.300 15.200L6.300 12.300 11.400 19 24.300 .2 27 .6 12.600 24.500H10.400z" fill="#0b0b0e"/><path d="M25.500 .4L27 .6 18.500 14z" fill="#5a3a2a"/></svg><span><i>[</i>捕鱼<i>]0.1</i>元炮场</span></div><div class="it" style="left:12px;top:264px"><u class="cb"></u><svg style="left:5px;top:-1px" width="28" height="27" viewBox="0 0 28 27"><path d="M3.300 15.200L6.300 12.300 11.400 19 24.300 .2 27 .6 12.600 24.500H10.400z" fill="#0b0b0e"/><path d="M25.500 .4L27 .6 18.500 14z" fill="#5a3a2a"/></svg><span><i>[</i>金瓶梅<i>]</i>金瓶梅</span></div><div class="it" style="left:12px;top:294px"><u class="cb"></u><svg style="left:5px;top:-1px" width="28" height="27" viewBox="0 0 28 27"><path d="M3.300 15.200L6.300 12.300 11.400 19 24.300 .2 27 .6 12.600 24.500H10.400z" fill="#0b0b0e"/><path d="M25.500 .4L27 .6 18.500 14z" fill="#5a3a2a"/></svg><span><i>[</i>红黑大战<i>]</i>红黑大战</span></div><div class="it" style="left:12px;top:324px"><u class="cb"></u><svg style="left:5px;top:-1px" width="28" height="27" viewBox="0 0 28 27"><path d="M3.300 15.200L6.300 12.300 11.400 19 24.300 .2 27 .6 12.600 24.500H10.400z" fill="#0b0b0e"/><path d="M25.500 .4L27 .6 18.500 14z" fill="#5a3a2a"/></svg><span><i>[</i>龙虎斗<i>]</i>龙虎斗</span></div><div class="it" style="left:12px;top:354px"><u class="cb"></u><svg style="left:5px;top:-1px" width="28" height="27" viewBox="0 0 28 27"><path d="M3.300 15.200L6.300 12.300 11.400 19 24.300 .2 27 .6 12.600 24.500H10.400z" fill="#0b0b0e"/><path d="M25.500 .4L27 .6 18.500 14z" fill="#5a3a2a"/></svg><span><i>[</i>飞禽走兽<i>]</i>飞禽走兽</span></div><div class="it" style="left:12px;top:384px"><u class="cb"></u><svg style="left:5px;top:-1px" width="28" height="27" viewBox="0 0 28 27"><path d="M3.300 15.200L6.300 12.300 11.400 19 24.300 .2 27 .6 12.600 24.500H10.400z" fill="#0b0b0e"/><path d="M25.500 .4L27 .6 18.500 14z" fill="#5a3a2a"/></svg><span><i>[</i>奔驰宝马<i>]</i>奔驰宝马</span></div><div class="it" style="left:12px;top:414px"><u class="cb"></u><svg style="left:5px;top:-1px" width="28" height="27" viewBox="0 0 28 27"><path d="M3.300 15.200L6.300 12.300 11.400 19 24.300 .2 27 .6 12.600 24.500H10.400z" fill="#0b0b0e"/><path d="M25.500 .4L27 .6 18.500 14z" fill="#5a3a2a"/></svg><span><i>[</i>水浒传<i>]</i>水浒传</span></div><div class="it" style="left:12px;top:444px"><u class="cb"></u><svg style="left:5px;top:-1px" width="28" height="27" viewBox="0 0 28 27"><path d="M3.300 15.200L6.300 12.300 11.400 19 24.300 .2 27 .6 12.600 24.500H10.400z" fill="#0b0b0e"/><path d="M25.500 .4L27 .6 18.500 14z" fill="#5a3a2a"/></svg><span><i>[</i>十三水<i>]</i>十三水<i>1</i></span></div><div class="it" style="left:12px;top:474px"><u class="cb"></u><svg style="left:5px;top:-1px" width="28" height="27" viewBox="0 0 28 27"><path d="M3.300 15.200L6.300 12.300 11.400 19 24.300 .2 27 .6 12.600 24.500H10.400z" fill="#0b0b0e"/><path d="M25.500 .4L27 .6 18.500 14z" fill="#5a3a2a"/></svg><span><i>[</i>十三水<i>]</i>十三水<i>2</i></span></div><div class="it" style="left:12px;top:504px"><u class="cb"></u><svg style="left:5px;top:-1px" width="28" height="27" viewBox="0 0 28 27"><path d="M3.300 15.200L6.300 12.300 11.400 19 24.300 .2 27 .6 12.600 24.500H10.400z" fill="#0b0b0e"/><path d="M25.500 .4L27 .6 18.500 14z" fill="#5a3a2a"/></svg><span><i>[</i>跑得快<i>]</i>跑得快<i>1</i></span></div><div class="it" style="left:12px;top:534px"><u class="cb"></u><svg style="left:5px;top:-1px" width="28" height="27" viewBox="0 0 28 27"><path d="M3.300 15.200L6.300 12.300 11.400 19 24.300 .2 27 .6 12.600 24.500H10.400z" fill="#0b0b0e"/><path d="M25.500 .4L27 .6 18.500 14z" fill="#5a3a2a"/></svg><span><i>[</i>跑得快<i>]</i>跑得快<i>2</i></span></div><div class="it" style="left:212px;top:84px"><u class="cb"></u><svg style="left:5px;top:-1px" width="28" height="27" viewBox="0 0 28 27"><path d="M3.300 15.200L6.300 12.300 11.400 19 24.300 .2 27 .6 12.600 24.500H10.400z" fill="#0b0b0e"/><path d="M25.500 .4L27 .6 18.500 14z" fill="#5a3a2a"/></svg><span><i>[</i>二人牛牛<i>]</i>二人牛牛</span></div><div class="it" style="left:212px;top:114px"><u class="cb"></u><svg style="left:5px;top:-1px" width="28" height="27" viewBox="0 0 28 27"><path d="M3.300 15.200L6.300 12.300 11.400 19 24.300 .2 27 .6 12.600 24.500H10.400z" fill="#0b0b0e"/><path d="M25.500 .4L27 .6 18.500 14z" fill="#5a3a2a"/></svg><span><i>[</i>通比牛牛<i>]</i>通比牛牛<i>1</i></span></div><div class="it" style="left:212px;top:144px"><u class="cb"></u><svg style="left:5px;top:-1px" width="28" height="27" viewBox="0 0 28 27"><path d="M3.300 15.200L6.300 12.300 11.400 19 24.300 .2 27 .6 12.600 24.500H10.400z" fill="#0b0b0e"/><path d="M25.500 .4L27 .6 18.500 14z" fill="#5a3a2a"/></svg><span><i>[</i>通比牛牛<i>]</i>通比牛牛<i>2</i></span></div><div class="it" style="left:212px;top:174px"><u class="cb"></u><svg style="left:5px;top:-1px" width="28" height="27" viewBox="0 0 28 27"><path d="M3.300 15.200L6.300 12.300 11.400 19 24.300 .2 27 .6 12.600 24.500H10.400z" fill="#0b0b0e"/><path d="M25.500 .4L27 .6 18.500 14z" fill="#5a3a2a"/></svg><span><i>[</i>炸金花<i>]</i>炸金花<i>1</i></span></div><div class="it" style="left:212px;top:204px"><u class="cb"></u><svg style="left:5px;top:-1px" width="28" height="27" viewBox="0 0 28 27"><path d="M3.300 15.200L6.300 12.300 11.400 19 24.300 .2 27 .6 12.600 24.500H10.400z" fill="#0b0b0e"/><path d="M25.500 .4L27 .6 18.500 14z" fill="#5a3a2a"/></svg><span><i>[</i>炸金花<i>]</i>炸金花<i>2</i></span></div><div class="it" style="left:212px;top:234px"><u class="cb"></u><svg style="left:5px;top:-1px" width="28" height="27" viewBox="0 0 28 27"><path d="M3.300 15.200L6.300 12.300 11.400 19 24.300 .2 27 .6 12.600 24.500H10.400z" fill="#0b0b0e"/><path d="M25.500 .4L27 .6 18.500 14z" fill="#5a3a2a"/></svg><span><i>[</i>炸金花<i>]</i>炸金花<i>3</i></span></div><div class="it" style="left:212px;top:264px"><u class="cb"></u><svg style="left:5px;top:-1px" width="28" height="27" viewBox="0 0 28 27"><path d="M3.300 15.200L6.300 12.300 11.400 19 24.300 .2 27 .6 12.600 24.500H10.400z" fill="#0b0b0e"/><path d="M25.500 .4L27 .6 18.500 14z" fill="#5a3a2a"/></svg><span><i>[</i>三公<i>]</i>三公<i>1</i></span></div><div class="it" style="left:212px;top:294px"><u class="cb"></u><svg style="left:5px;top:-1px" width="28" height="27" viewBox="0 0 28 27"><path d="M3.300 15.200L6.300 12.300 11.400 19 24.300 .2 27 .6 12.600 24.500H10.400z" fill="#0b0b0e"/><path d="M25.500 .4L27 .6 18.500 14z" fill="#5a3a2a"/></svg><span><i>[</i>三公<i>]</i>三公<i>2</i></span></div><div class="it" style="left:212px;top:324px"><u class="cb"></u><svg style="left:5px;top:-1px" width="28" height="27" viewBox="0 0 28 27"><path d="M3.300 15.200L6.300 12.300 11.400 19 24.300 .2 27 .6 12.600 24.500H10.400z" fill="#0b0b0e"/><path d="M25.500 .4L27 .6 18.500 14z" fill="#5a3a2a"/></svg><span><i>[</i>德州扑克<i>]</i>德州扑克<i>1</i></span></div><div class="it" style="left:212px;top:354px"><u class="cb"></u><svg style="left:5px;top:-1px" width="28" height="27" viewBox="0 0 28 27"><path d="M3.300 15.200L6.300 12.300 11.400 19 24.300 .2 27 .6 12.600 24.500H10.400z" fill="#0b0b0e"/><path d="M25.500 .4L27 .6 18.500 14z" fill="#5a3a2a"/></svg><span><i>[</i>德州扑克<i>]</i>德州扑克<i>2</i></span></div><div class="it" style="left:212px;top:384px"><u class="cb"></u><svg style="left:5px;top:-1px" width="28" height="27" viewBox="0 0 28 27"><path d="M3.300 15.200L6.300 12.300 11.400 19 24.300 .2 27 .6 12.600 24.500H10.400z" fill="#0b0b0e"/><path d="M25.500 .4L27 .6 18.500 14z" fill="#5a3a2a"/></svg><span><i>[</i>二八杠<i>]</i>二八杠</span></div><div class="it" style="left:212px;top:414px"><u class="cb"></u><svg style="left:5px;top:-1px" width="28" height="27" viewBox="0 0 28 27"><path d="M3.300 15.200L6.300 12.300 11.400 19 24.300 .2 27 .6 12.600 24.500H10.400z" fill="#0b0b0e"/><path d="M25.500 .4L27 .6 18.500 14z" fill="#5a3a2a"/></svg><span><i>[</i>抢庄牛牛<i>]</i>四人牛牛<i>1</i></span></div><div class="it" style="left:212px;top:444px"><u class="cb"></u><svg style="left:5px;top:-1px" width="28" height="27" viewBox="0 0 28 27"><path d="M3.300 15.200L6.300 12.300 11.400 19 24.300 .2 27 .6 12.600 24.500H10.400z" fill="#0b0b0e"/><path d="M25.500 .4L27 .6 18.500 14z" fill="#5a3a2a"/></svg><span><i>[</i>抢庄牛牛<i>]</i>四人牛牛<i>2</i></span></div><div class="it" style="left:212px;top:474px"><u class="cb"></u><svg style="left:5px;top:-1px" width="28" height="27" viewBox="0 0 28 27"><path d="M3.300 15.200L6.300 12.300 11.400 19 24.300 .2 27 .6 12.600 24.500H10.400z" fill="#0b0b0e"/><path d="M25.500 .4L27 .6 18.500 14z" fill="#5a3a2a"/></svg><span><i>[</i>抢庄牛牛<i>]</i>四人牛牛<i>3</i></span></div><div class="it" style="left:212px;top:504px"><u class="cb"></u><svg style="left:5px;top:-1px" width="28" height="27" viewBox="0 0 28 27"><path d="M3.300 15.200L6.300 12.300 11.400 19 24.300 .2 27 .6 12.600 24.500H10.400z" fill="#0b0b0e"/><path d="M25.500 .4L27 .6 18.500 14z" fill="#5a3a2a"/></svg><span><i>[</i>抢庄牛牛<i>]</i>四人牛牛<i>4</i></span></div><div class="it" style="left:212px;top:534px"><u class="cb"></u><svg style="left:5px;top:-1px" width="28" height="27" viewBox="0 0 28 27"><path d="M3.300 15.200L6.300 12.300 11.400 19 24.300 .2 27 .6 12.600 24.500H10.400z" fill="#0b0b0e"/><path d="M25.500 .4L27 .6 18.500 14z" fill="#5a3a2a"/></svg><span><i>[</i>填大坑<i>]</i>填大坑<i>2</i></span></div><div class="it" style="left:412px;top:84px"><u class="cb"></u><svg style="left:5px;top:-1px" width="28" height="27" viewBox="0 0 28 27"><path d="M3.300 15.200L6.300 12.300 11.400 19 24.300 .2 27 .6 12.600 24.500H10.400z" fill="#0b0b0e"/><path d="M25.500 .4L27 .6 18.500 14z" fill="#5a3a2a"/></svg><span><i>[21</i>点<i>]21</i>点</span></div><div class="it" style="left:412px;top:114px"><u class="cb"></u><svg style="left:5px;top:-1px" width="28" height="27" viewBox="0 0 28 27"><path d="M3.300 15.200L6.300 12.300 11.400 19 24.300 .2 27 .6 12.600 24.500H10.400z" fill="#0b0b0e"/><path d="M25.500 .4L27 .6 18.500 14z" fill="#5a3a2a"/></svg><span><i>[</i>梭哈<i>]</i>梭哈<i>1</i></span></div><div class="it" style="left:412px;top:144px"><u class="cb"></u><svg style="left:5px;top:-1px" width="28" height="27" viewBox="0 0 28 27"><path d="M3.300 15.200L6.300 12.300 11.400 19 24.300 .2 27 .6 12.600 24.500H10.400z" fill="#0b0b0e"/><path d="M25.500 .4L27 .6 18.500 14z" fill="#5a3a2a"/></svg><span><i>[</i>梭哈<i>]</i>梭哈<i>2</i></span></div><div class="it" style="left:412px;top:174px"><u class="cb"></u><svg style="left:5px;top:-1px" width="28" height="27" viewBox="0 0 28 27"><path d="M3.300 15.200L6.300 12.300 11.400 19 24.300 .2 27 .6 12.600 24.500H10.400z" fill="#0b0b0e"/><path d="M25.500 .4L27 .6 18.500 14z" fill="#5a3a2a"/></svg><span><i>[</i>麻将<i>]</i>血战麻将<i>1</i></span></div><div class="it" style="left:412px;top:204px"><u class="cb"></u><svg style="left:5px;top:-1px" width="28" height="27" viewBox="0 0 28 27"><path d="M3.300 15.200L6.300 12.300 11.400 19 24.300 .2 27 .6 12.600 24.500H10.400z" fill="#0b0b0e"/><path d="M25.500 .4L27 .6 18.500 14z" fill="#5a3a2a"/></svg><span><i>[</i>麻将<i>]</i>血战麻将<i>2</i></span></div><div class="it" style="left:412px;top:234px"><u class="cb"></u><svg style="left:5px;top:-1px" width="28" height="27" viewBox="0 0 28 27"><path d="M3.300 15.200L6.300 12.300 11.400 19 24.300 .2 27 .6 12.600 24.500H10.400z" fill="#0b0b0e"/><path d="M25.500 .4L27 .6 18.500 14z" fill="#5a3a2a"/></svg><span><i>[</i>麻将<i>]</i>二人麻将</span></div><div class="it" style="left:412px;top:264px"><u class="cb"></u><svg style="left:5px;top:-1px" width="28" height="27" viewBox="0 0 28 27"><path d="M3.300 15.200L6.300 12.300 11.400 19 24.300 .2 27 .6 12.600 24.500H10.400z" fill="#0b0b0e"/><path d="M25.500 .4L27 .6 18.500 14z" fill="#5a3a2a"/></svg><span><i>[</i>斗地主<i>]</i>欢乐斗地主</span></div><div class="it" style="left:412px;top:294px"><u class="cb"></u><svg style="left:5px;top:-1px" width="28" height="27" viewBox="0 0 28 27"><path d="M3.300 15.200L6.300 12.300 11.400 19 24.300 .2 27 .6 12.600 24.500H10.400z" fill="#0b0b0e"/><path d="M25.500 .4L27 .6 18.500 14z" fill="#5a3a2a"/></svg><span><i>[</i>斗地主<i>]</i>癞子斗地主</span></div><div class="it" style="left:412px;top:324px"><u class="cb"></u><svg style="left:5px;top:-1px" width="28" height="27" viewBox="0 0 28 27"><path d="M3.300 15.200L6.300 12.300 11.400 19 24.300 .2 27 .6 12.600 24.500H10.400z" fill="#0b0b0e"/><path d="M25.500 .4L27 .6 18.500 14z" fill="#5a3a2a"/></svg><span><i>[</i>牌九<i>]</i>牌九<i>1</i></span></div><div class="it" style="left:412px;top:354px"><u class="cb"></u><svg style="left:5px;top:-1px" width="28" height="27" viewBox="0 0 28 27"><path d="M3.300 15.200L6.300 12.300 11.400 19 24.300 .2 27 .6 12.600 24.500H10.400z" fill="#0b0b0e"/><path d="M25.500 .4L27 .6 18.500 14z" fill="#5a3a2a"/></svg><span><i>[</i>牌九<i>]</i>牌九<i>2</i></span></div><div class="it" style="left:412px;top:384px"><u class="cb"></u><svg style="left:5px;top:-1px" width="28" height="27" viewBox="0 0 28 27"><path d="M3.300 15.200L6.300 12.300 11.400 19 24.300 .2 27 .6 12.600 24.500H10.400z" fill="#0b0b0e"/><path d="M25.500 .4L27 .6 18.500 14z" fill="#5a3a2a"/></svg><span><i>[</i>升级<i>]</i>升级<i>1</i></span></div><div class="it" style="left:412px;top:414px"><u class="cb"></u><svg style="left:5px;top:-1px" width="28" height="27" viewBox="0 0 28 27"><path d="M3.300 15.200L6.300 12.300 11.400 19 24.300 .2 27 .6 12.600 24.500H10.400z" fill="#0b0b0e"/><path d="M25.500 .4L27 .6 18.500 14z" fill="#5a3a2a"/></svg><span><i>[</i>升级<i>]</i>升级<i>2</i></span></div><div class="it" style="left:412px;top:444px"><u class="cb"></u><svg style="left:5px;top:-1px" width="28" height="27" viewBox="0 0 28 27"><path d="M3.300 15.200L6.300 12.300 11.400 19 24.300 .2 27 .6 12.600 24.500H10.400z" fill="#0b0b0e"/><path d="M25.500 .4L27 .6 18.500 14z" fill="#5a3a2a"/></svg><span><i>[</i>拖拉机<i>]</i>拖拉机</span></div><div class="it" style="left:412px;top:474px"><u class="cb"></u><svg style="left:5px;top:-1px" width="28" height="27" viewBox="0 0 28 27"><path d="M3.300 15.200L6.300 12.300 11.400 19 24.300 .2 27 .6 12.600 24.500H10.400z" fill="#0b0b0e"/><path d="M25.500 .4L27 .6 18.500 14z" fill="#5a3a2a"/></svg><span><i>[</i>够级<i>]</i>够级<i>1</i></span></div><div class="it" style="left:412px;top:504px"><u class="cb"></u><svg style="left:5px;top:-1px" width="28" height="27" viewBox="0 0 28 27"><path d="M3.300 15.200L6.300 12.300 11.400 19 24.300 .2 27 .6 12.600 24.500H10.400z" fill="#0b0b0e"/><path d="M25.500 .4L27 .6 18.500 14z" fill="#5a3a2a"/></svg><span><i>[</i>填大坑<i>]</i>填大坑<i>1</i></span></div><div class="it" style="left:412px;top:534px"><u class="cb"></u><svg style="left:5px;top:-1px" width="28" height="27" viewBox="0 0 28 27"><path d="M3.300 15.200L6.300 12.300 11.400 19 24.300 .2 27 .6 12.600 24.500H10.400z" fill="#0b0b0e"/><path d="M25.500 .4L27 .6 18.500 14z" fill="#5a3a2a"/></svg><span><i>[</i>明牌牛牛<i>]</i>明牌抢庄<i>1</i></span></div><div class="it" style="left:612px;top:84px"><u class="cb"></u><svg style="left:5px;top:-1px" width="28" height="27" viewBox="0 0 28 27"><path d="M3.300 15.200L6.300 12.300 11.400 19 24.300 .2 27 .6 12.600 24.500H10.400z" fill="#0b0b0e"/><path d="M25.500 .4L27 .6 18.500 14z" fill="#5a3a2a"/></svg><span><i>[</i>斗地主<i>]</i>斗地主<i>2</i></span></div>
<div class="fb" style="left:189px;top:577px;border-color:#3a74c8;box-shadow:inset 0 0 0 1px #cfe0f6">开启房间</div><div class="fb" style="left:324px;top:577px">全选房间</div><div class="fb" style="left:459px;top:577px">反选房间</div></div>
<div class="win" id="ddz2" style="left:715px;top:355px;width:507px;height:390px">
<svg style="left:8px;top:5px" width="19" height="18" viewBox="0 0 19 18"><ellipse cx="5.500" cy="6" rx="4.200" ry="4.600" fill="#eef1f4" stroke="#a4acb4" stroke-width=".8" transform="rotate(-30 5.500 6)"/><path d="M3 4.500c1.500-1 3-.5 3.500 1" stroke="#7d858d" stroke-width="1" fill="none"/><path d="M6 10l1.500 4.500" stroke="#d8dde2" stroke-width="2.500"/><rect x="8.500" y="4" width="8.500" height="9" rx=".8" fill="#3aa4ea" stroke="#9aa6b2" stroke-width=".8"/><path d="M9 4.500h7.500L9 10z" fill="#8fe0f8" opacity=".8"/><path d="M9 12.500l7.500-6v6z" fill="#1f6fd0" opacity=".7"/><ellipse cx="12" cy="15" rx="5" ry="2.200" fill="#f2f4f6" stroke="#9aa2aa" stroke-width=".8"/></svg><span class="ttl" style="left:10px;width:505px;top:-1px">[ 斗地主 ] -- [ 斗地主2 ] -- [ 运行 ]</span><div class="capb" style="right:5px;width:101px"><b style="left:0;width:27px"><u class="gmin"></u></b><b style="left:27px;width:26px"><u class="gmax"></u></b><b style="left:53px;width:46px;"><u class="gx">x</u></b></div><div class="cli" style="left:6px;top:30px;width:493px;height:351px">
<div style="left:8px;top:14px;width:476px;height:66px;border:1px solid #a8a8a8;box-shadow:inset 1px 1px 0 #fff,1px 1px 0 #fff"></div><div style="left:444px;top:29px;width:6px;height:5px;background:#c8602a"></div><span class="t lb" style="left:15px;top:9px;padding:0 2px;background:#f0f0f0">游戏服务信息<i>:</i></span><span class="t lb" style="left:23px;top:32px">游戏名字<i>:</i></span><div class="ed" style="left:93px;top:29px"><span class="t lb" style="left:2px;top:2px">斗地主</span></div><span class="t lb" style="left:226px;top:32px">监听端口<i>:</i></span><div class="ed" style="left:295px;top:29px;width:104px"></div><span class="t lb" style="left:23px;top:56px">房间名称<i>:</i></span><div class="ed" style="left:93px;top:53px"><span class="t lb" style="left:2px;top:2px">斗地主<i>2</i></span></div><span class="t lb" style="left:226px;top:56px">游戏类型<i>:</i></span><div class="ed" style="left:295px;top:53px;width:104px"></div><div class="log" style="left:10px;top:84px;width:394px;height:260px"><div class="ln" style="top:3px"><s>【<i> 2020-12-18 14:08:52 </i><b>】</b></s><i>[ </i>斗地主<i>2 ] </i>房间正在启动<i>...</i></div><div class="ln" style="top:19px"><s>【<i> 2020-12-18 14:08:52 </i><b>】</b></s>正在初始化组件<i>...</i></div><div class="ln" style="top:35px"><s>【<i> 2020-12-18 14:08:53 </i><b>】</b></s>正在连接协调服务器<i> [ 127.0.0.1:8610 ]</i></div><div class="ln" style="top:51px"><s>【<i> 2020-12-18 14:08:53 </i><b>】</b></s>正在发送游戏房间注册信息<i>...</i></div><div class="ln" style="top:67px"><s>【<i> 2020-12-18 14:08:53 </i><b>】</b></s>服务启动成功</div><div style="right:0;top:0;width:17px;height:100%;background:#fff;border-left:1px solid #d9d9d9"></div><div style="right:0;bottom:0;width:17px;height:17px;background:#fff;border:1px solid #c8c8c8"></div><svg style="left:379px;top:246px" width="9" height="6" viewBox="0 0 9 6"><path d="M.5.5l4 4 4-4" fill="none" stroke="#606060" stroke-width="1.200"/></svg></div>
<div class="btn" style="left:412px;top:138px;width:72px;height:20px"></div><div class="btn" style="left:412px;top:164px;width:72px;height:20px"></div><div class="btn" style="left:412px;top:189px;width:72px;height:20px"></div><div class="btn" style="left:412px;top:214px;width:72px;height:20px"></div><div class="btn" style="left:412px;top:240px;width:72px;height:20px"></div><div class="btn" style="left:412px;top:266px;width:72px;height:20px"></div><div class="btn" style="left:412px;top:291px;width:72px;height:20px"></div><div class="btn" style="left:412px;top:317px;width:72px;height:21px;line-height:20px">调试信息</div>
</div></div>
<div class="win" id="ddz1" style="left:526px;top:323px;width:507px;height:390px">
<svg style="left:8px;top:5px" width="19" height="18" viewBox="0 0 19 18"><ellipse cx="5.500" cy="6" rx="4.200" ry="4.600" fill="#eef1f4" stroke="#a4acb4" stroke-width=".8" transform="rotate(-30 5.500 6)"/><path d="M3 4.500c1.500-1 3-.5 3.500 1" stroke="#7d858d" stroke-width="1" fill="none"/><path d="M6 10l1.500 4.500" stroke="#d8dde2" stroke-width="2.500"/><rect x="8.500" y="4" width="8.500" height="9" rx=".8" fill="#3aa4ea" stroke="#9aa6b2" stroke-width=".8"/><path d="M9 4.500h7.500L9 10z" fill="#8fe0f8" opacity=".8"/><path d="M9 12.500l7.500-6v6z" fill="#1f6fd0" opacity=".7"/><ellipse cx="12" cy="15" rx="5" ry="2.200" fill="#f2f4f6" stroke="#9aa2aa" stroke-width=".8"/></svg><span class="ttl" style="left:0px;width:505px;top:-1px">[ 斗地主 ] -- [ 斗地主1 ] -- [ 运行 ]</span><div class="capb" style="right:5px;width:101px"><b style="left:0;width:27px"><u class="gmin"></u></b><b style="left:27px;width:26px"><u class="gmax"></u></b><b style="left:53px;width:46px;"><u class="gx">x</u></b></div><div class="cli" style="left:6px;top:30px;width:493px;height:351px">
<div style="left:8px;top:14px;width:476px;height:66px;border:1px solid #a8a8a8;box-shadow:inset 1px 1px 0 #fff,1px 1px 0 #fff"></div><div style="left:444px;top:29px;width:6px;height:5px;background:#c8602a"></div><span class="t lb" style="left:15px;top:9px;padding:0 2px;background:#f0f0f0">游戏服务信息<i>:</i></span><span class="t lb" style="left:23px;top:32px">游戏名字<i>:</i></span><div class="ed" style="left:93px;top:29px"><span class="t lb" style="left:2px;top:2px">斗地主</span></div><span class="t lb" style="left:226px;top:32px">监听端口<i>:</i></span><div class="ed" style="left:295px;top:29px;width:104px"></div><span class="t lb" style="left:23px;top:56px">房间名称<i>:</i></span><div class="ed" style="left:93px;top:53px"><span class="t lb" style="left:2px;top:2px">斗地主<i>1</i></span></div><span class="t lb" style="left:226px;top:56px">游戏类型<i>:</i></span><div class="ed" style="left:295px;top:53px;width:104px"></div><div class="log" style="left:10px;top:84px;width:394px;height:260px"><div class="ln" style="top:3px"><s>【<i> 2020-12-18 14:08:52 </i><b>】</b></s><i>[ </i>斗地主<i>1 ] </i>房间正在启动<i>...</i></div><div class="ln" style="top:19px"><s>【<i> 2020-12-18 14:08:52 </i><b>】</b></s>正在初始化组件<i>...</i></div><div class="ln" style="top:35px"><s>【<i> 2020-12-18 14:08:53 </i><b>】</b></s>正在连接协调服务器<i> [ 127.0.0.1:8610 ]</i></div><div class="ln" style="top:51px"><s>【<i> 2020-12-18 14:08:53 </i><b>】</b></s>正在发送游戏房间注册信息<i>...</i></div><div class="ln" style="top:67px"><s>【<i> 2020-12-18 14:08:53 </i><b>】</b></s>服务启动成功</div><div style="right:0;top:0;width:17px;height:100%;background:#fff;border-left:1px solid #d9d9d9"></div><div style="right:0;bottom:0;width:17px;height:17px;background:#fff;border:1px solid #c8c8c8"></div><svg style="left:379px;top:246px" width="9" height="6" viewBox="0 0 9 6"><path d="M.5.5l4 4 4-4" fill="none" stroke="#606060" stroke-width="1.200"/></svg></div>
<div class="btn" style="left:412px;top:138px;width:72px;height:20px"></div><div class="btn" style="left:412px;top:164px;width:72px;height:20px"></div><div class="btn" style="left:412px;top:189px;width:72px;height:20px"></div><div class="btn" style="left:412px;top:214px;width:72px;height:20px"></div><div class="btn" style="left:412px;top:240px;width:72px;height:20px"></div><div class="btn" style="left:412px;top:266px;width:72px;height:20px"></div><div class="btn" style="left:412px;top:291px;width:72px;height:20px"></div><div class="btn" style="left:412px;top:317px;width:72px;height:21px;line-height:20px">调试信息</div>
</div></div>
<div class="win" id="chat" style="left:744px;top:384px;width:448px;height:333px">
<svg style="left:8px;top:6px" width="18" height="16" viewBox="0 0 18 16"><ellipse cx="7" cy="6.500" rx="6" ry="5" fill="#4aa0e8" stroke="#dbe8f2" stroke-width=".8"/><path d="M3 10l-1 4 4-2z" fill="#4aa0e8"/><ellipse cx="11.500" cy="9.500" rx="5" ry="4" fill="#f6e7a0" stroke="#fff" stroke-width=".9"/><path d="M14 12.500l2 2.500-4-1z" fill="#f6e7a0"/></svg><span class="ttl" style="left:0;width:446px;top:-1px">聊天服务器 -- [ 运行 ]</span><div class="capb" style="right:5px;width:101px"><b style="left:0;width:27px"><u class="gmin"></u></b><b style="left:27px;width:26px"><u class="gmax"></u></b><b style="left:53px;width:46px;"><u class="gx">x</u></b></div><div class="cli" style="left:6px;top:30px;width:434px;height:294px">
<div class="log" style="left:7px;top:8px;width:420px;height:248px"><div class="ln" style="top:3px"><s>【<i> 2020-12-18 13:25:15 </i><b>】</b></s>正在初始化组件<i>...</i></div><div class="ln" style="top:19px"><s>【<i> 2020-12-18 13:25:15 </i><b>】</b></s>正在连接协调服务器<i> [ 127.0.0.1:8610 ]</i></div><div class="ln" style="top:35px"><s>【<i> 2020-12-18 13:25:15 </i><b>】</b></s>正在注册游戏聊天服务器<i>...</i></div><div class="ln" style="top:51px"><s>【<i> 2020-12-18 13:25:15 </i><b>】</b></s>服务启动成功</div></div>
<div class="btn dis" style="left:66px;top:261px;width:72px;height:21px;line-height:20px">启动服务</div><div class="btn " style="left:285px;top:261px;width:72px;height:21px;line-height:20px">停止服务</div>
</div></div>
<div class="win" id="login" style="left:1186px;top:188px;width:444px;height:335px">
<svg style="left:8px;top:5px" width="18" height="18" viewBox="0 0 18 18"><circle cx="5.500" cy="12.500" r="3.500" fill="none" stroke="#e8a820" stroke-width="2.200"/><path d="M8 10l7-7M13 5l2 2M11 7l1.500 1.500" stroke="#a8b0b8" stroke-width="2.200" stroke-linecap="round"/></svg><span class="ttl" style="left:0;width:442px;top:-1px">登录服务器 -- [ 运行 ]</span><div class="capb" style="right:5px;width:101px"><b style="left:0;width:27px"><u class="gmin"></u></b><b style="left:27px;width:26px"><u class="gmax"></u></b><b style="left:53px;width:46px;"><u class="gx">x</u></b></div><div class="cli" style="left:6px;top:30px;width:430px;height:296px">
<div class="log" style="left:7px;top:8px;width:413px;height:251px"><div class="ln" style="top:-7px"><s>【<i> 2020-12-18 13:46:53 </i><b>】</b></s>正在连接约战服务器<i> [ 127.0.0.1:8640 ]</i></div><div class="ln" style="top:9px"><s>【<i> 2020-12-18 13:46:53 </i><b>】</b></s>正在注册游戏登录服务器<i>...</i></div><div class="ln" style="top:25px"><s>【<i> 2020-12-18 13:46:53 </i><b>】</b></s>服务启动成功</div><div class="ln" style="top:41px"><s>【<i> 2020-12-18 13:46:57 </i><b>】</b></s>服务停止成功</div><div class="ln" style="top:57px"><s>【<i> 2020-12-18 13:47:15 </i><b>】</b></s>正在初始化组件<i>...</i></div><div class="ln" style="top:73px"><s>【<i> 2020-12-18 13:47:15 </i><b>】</b></s>正在连接协调服务器<i> [ 127.0.0.1:8610 ]</i></div><div class="ln" style="top:89px"><s>【<i> 2020-12-18 13:47:15 </i><b>】</b></s>正在连接约战服务器<i> [ 127.0.0.1:8640 ]</i></div><div class="ln" style="top:105px"><s>【<i> 2020-12-18 13:47:15 </i><b>】</b></s>正在注册游戏登录服务器<i>...</i></div><div class="ln" style="top:121px"><s>【<i> 2020-12-18 13:47:15 </i><b>】</b></s>服务启动成功</div><div class="ln" style="top:137px"><s>【<i> 2020-12-18 13:47:16 </i><b>】</b></s>服务停止成功</div><div class="ln" style="top:153px"><s>【<i> 2020-12-18 13:47:16 </i><b>】</b></s>正在初始化组件<i>...</i></div><div class="ln" style="top:169px"><s>【<i> 2020-12-18 13:47:16 </i><b>】</b></s>正在连接协调服务器<i> [ 127.0.0.1:8610 ]</i></div><div class="ln" style="top:185px"><s>【<i> 2020-12-18 13:47:16 </i><b>】</b></s>正在连接约战服务器<i> [ 127.0.0.1:8640 ]</i></div><div class="ln" style="top:201px"><s>【<i> 2020-12-18 13:47:16 </i><b>】</b></s>正在注册游戏登录服务器<i>...</i></div><div class="ln" style="top:217px"><s>【<i> 2020-12-18 13:47:16 </i><b>】</b></s>服务启动成功</div><div style="right:0;top:0;width:17px;height:100%;background:#fff;border-left:1px solid #d9d9d9"></div><div style="right:0;top:0;width:17px;height:17px;background:#fff;border:1px solid #c8c8c8"></div><svg style="left:398px;top:5px" width="9" height="6" viewBox="0 0 9 6"><path d="M.5 5.500l4-4 4 4" fill="none" stroke="#606060" stroke-width="1.200"/></svg><div style="right:0;bottom:0;width:17px;height:17px;background:#fff;border:1px solid #c8c8c8"></div><svg style="left:398px;top:237px" width="9" height="6" viewBox="0 0 9 6"><path d="M.5.5l4 4 4-4" fill="none" stroke="#606060" stroke-width="1.200"/></svg><div style="right:0;bottom:19px;width:17px;height:18px;background:#dadada;border:1px solid #b0b0b0"></div><div style="right:4px;bottom:24px;width:8px;height:7px;background:repeating-linear-gradient(#606060 0 1px,transparent 1px 3px)"></div></div>
<div class="btn dis" style="left:30px;top:267px;width:74px;height:23px;line-height:22px">启动服务</div><div class="btn " style="left:129px;top:267px;width:74px;height:23px;line-height:22px">停止服务</div><div class="btn dis" style="left:228px;top:267px;width:74px;height:23px;line-height:22px">系统配置</div><div class="btn " style="left:327px;top:267px;width:74px;height:23px;line-height:22px">退出系统</div>
</div></div>
<div class="win act" id="yz" style="left:165px;top:521px;width:444px;height:335px">
<svg style="left:8px;top:7px" width="18" height="16" viewBox="0 0 18 16"><path d="M1 4L4 3.500 6 10.500 8 1.500 11 2 7.500 14.500H4.500z" fill="#f0a030" stroke="#b5561a" stroke-width=".6"/><path d="M10 3l6.500-.5-.5 2-4 .5-.5 1.500c3.500-.5 4.500 1.500 4 3.500-.5 3-5.500 4.500-8.500 4l1-2c3 .5 5.500-1 5.500-2.500s-2-1.500-4-1z" fill="#f3ab3a" stroke="#a84a12" stroke-width=".6"/><path d="M13.500 7.500c1.500.5 1.500 2 1 3" stroke="#fde8b0" stroke-width="1.200" fill="none"/><path d="M8.500 3l1.500 2" stroke="#6a1a3a" stroke-width="1"/></svg><span class="ttl" style="left:0;width:442px;top:-1px">约战服务器 -- [ 运行 ]</span><div class="capb" style="right:5px;width:101px"><b style="left:0;width:27px"><u class="gmin"></u></b><b style="left:27px;width:26px"><u class="gmax" style="border-color:#4a5a8a"></u></b><b style="left:53px;width:47px;background:#b65a2c;border-left:0;height:21px"><u class="gx">x</u></b></div><div class="cli" style="left:6px;top:30px;width:430px;height:296px">
<div class="log" style="left:8px;top:8px;width:413px;height:251px"><div class="ln" style="top:3px"><s>【<i> 2020-12-18 13:25:21 </i><b>】</b></s>正在初始化组件<i>...</i></div><div class="ln" style="top:19px"><s>【<i> 2020-12-18 13:25:21 </i><b>】</b></s>服务启动成功</div></div>
<div class="btn dis" style="left:30px;top:267px;width:74px;height:23px;line-height:22px">启动服务</div><div class="btn def" style="left:129px;top:267px;width:74px;height:23px;line-height:22px">停止服务</div><div class="btn dis" style="left:228px;top:267px;width:74px;height:23px;line-height:22px">系统配置</div><div class="btn " style="left:327px;top:267px;width:74px;height:23px;line-height:22px">退出系统</div>
</div></div>
</div>
<div class="sbv"></div><div class="sbh"></div>
<div style="left:1871px;top:990px;width:17px;height:17px;background:#f0f0f0"></div>
<div class="thv" style="left:1872px;top:48px;width:15px;height:820px"></div>
<div style="left:1876px;top:455px;width:7px;height:8px;background:repeating-linear-gradient(#7a7d80 0 1px,#fff 1px 2px,transparent 2px 3px)"></div>
<div class="thh" style="left:26px;top:991px;width:1772px;height:15px"></div>
<div style="left:908px;top:995px;width:8px;height:7px;background:repeating-linear-gradient(90deg,#7a7d80 0 1px,#fff 1px 2px,transparent 2px 3px)"></div>
<svg style="left:1871px;top:30px" width="17" height="17" viewBox="0 0 17 17"><path d="M5 10.5l3.5-4 3.5 4z" fill="#3c404a"/></svg>
<svg style="left:1871px;top:973px" width="17" height="17" viewBox="0 0 17 17"><path d="M5 7l3.5 4 3.5-4z" fill="#3c404a"/></svg>
<svg style="left:8px;top:990px" width="17" height="17" viewBox="0 0 17 17"><path d="M10 5l-4 3.5 4 3.5z" fill="#3c404a"/></svg>
<svg style="left:1853px;top:990px" width="17" height="17" viewBox="0 0 17 17"><path d="M7 5l4 3.5-4 3.5z" fill="#3c404a"/></svg>
<svg style="left:1874px;top:993px" width="12" height="12" viewBox="0 0 12 12"><path d="M9 3h2v2H9zM9 6h2v2H9zM9 9h2v2H9zM6 6h2v2H6zM6 9h2v2H6zM3 9h2v2H3z" fill="#b8bcc2"/></svg>
</body></html>
